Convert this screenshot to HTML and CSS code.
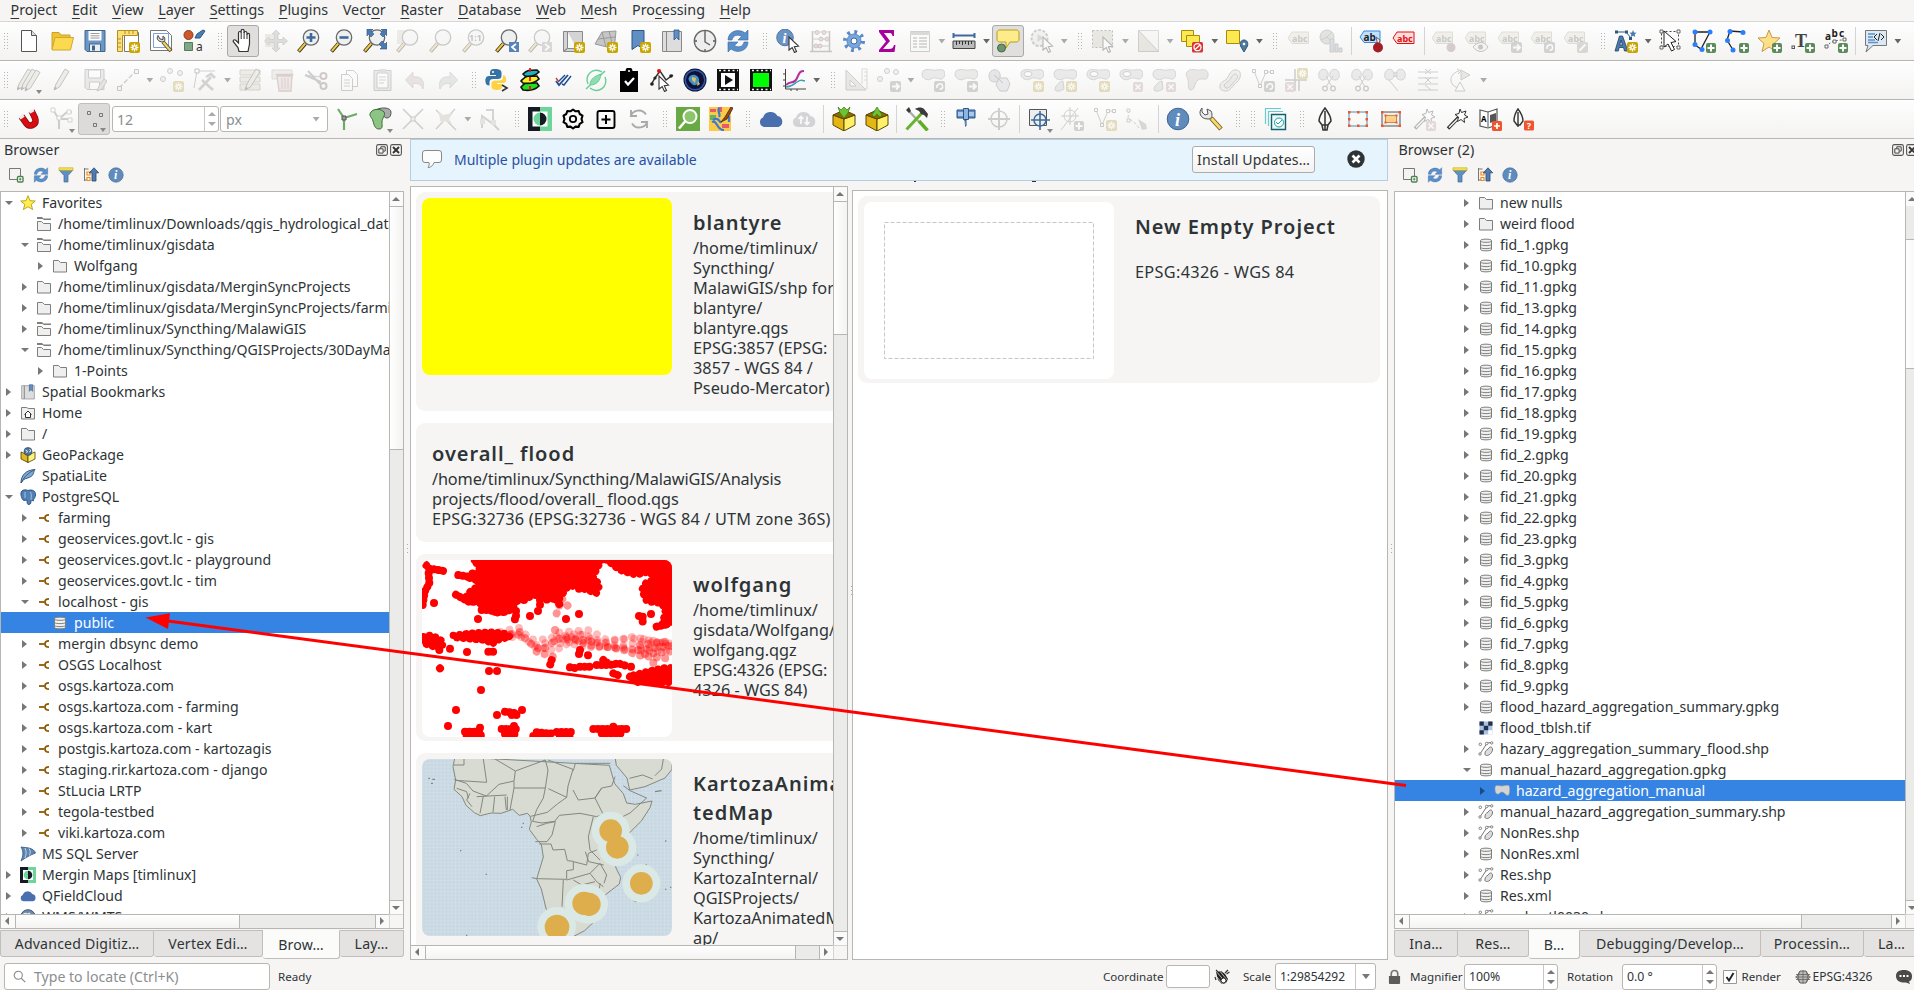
FILE: index.html
```html
<!DOCTYPE html>
<html lang="en">
<head>
<meta charset="utf-8">
<title>QGIS</title>
<link rel="stylesheet" href="styles.css">
</head>
<body>
<svg class="sprite" width="0" height="0">
<!-- badges -->
<symbol id="b-new" viewBox="0 0 24 24"><rect x="13" y="13" width="11" height="11" rx="2" fill="#c9a500"/><path d="M18.500 14.500v8M14.500 18.500h8M15.700 15.700l5.600 5.600M21.300 15.700l-5.600 5.600" stroke="#fff" stroke-width="1.300"/><circle cx="18.500" cy="18.500" r="1" fill="#c9a500"/></symbol>
<symbol id="b-plus" viewBox="0 0 24 24"><rect x="14" y="14" width="10" height="10" rx="2" fill="#5a8c5a"/><path d="M19 15.500v7M15.500 19h7" stroke="#fff" stroke-width="2"/></symbol>
<symbol id="b-arr" viewBox="0 0 24 24"><rect x="13" y="13" width="11" height="11" rx="2" fill="#888"/><path d="M15 18.500h7M19 15.500l3 3-3 3" stroke="#fff" stroke-width="1.800" fill="none"/></symbol>
<symbol id="b-rot" viewBox="0 0 24 24"><rect x="13" y="13" width="11" height="11" rx="2" fill="#888"/><path d="M16 20c-1-4 5-6 5.500-2s-3 3-3 3" stroke="#fff" stroke-width="1.600" fill="none"/></symbol>
<symbol id="b-x" viewBox="0 0 24 24"><rect x="14" y="14" width="10" height="10" rx="2" fill="#c99"/><path d="M16.500 16.500l5 5M21.500 16.500l-5 5" stroke="#fff" stroke-width="1.600"/></symbol>
<symbol id="mag" viewBox="0 0 24 24"><path d="M1.500 22.500l7-8" stroke="#222" stroke-width="3.600"/><path d="M1.800 22l6.500-7.500" stroke="#f5c93a" stroke-width="2"/><circle cx="14" cy="8.500" r="7.700" fill="#eef0f0" stroke="#6a6a6a" stroke-width="1.300"/></symbol>
<symbol id="cursor" viewBox="0 0 24 24"><path d="M11 8v13l3.200-2.500 2.300 5 2-1-2.200-4.700 4.200-.6z" fill="#fff" stroke="#333" stroke-width="1.100"/></symbol>
<symbol id="blob" viewBox="0 0 24 24"><path d="M1 6c0-5 6-5 10-4s10-2 12 1 0 9-4 8-6-2-9 0-9 0-9-5z" fill="#c5cbc5" stroke="#888"/></symbol>
<symbol id="pencil" viewBox="0 0 24 24"><path d="M4 22l2-6L15 1l4 2.500L9.500 19z" fill="#d8d2b8" stroke="#555"/><path d="M4 22l1-3.300 2 1.500z" fill="#333"/></symbol>
<!-- file and view tools -->
<symbol id="new" viewBox="0 0 24 24"><path d="M4.500 1.500h10l5 5v16h-15z" fill="#fff" stroke="#555"/><path d="M14.500 1.500v5h5" fill="#ddd" stroke="#555"/></symbol>
<symbol id="open" viewBox="0 0 24 24"><path d="M2 20V3.500h7l2 2.500h9v4" fill="#f0c332" stroke="#caa12a"/><path d="M2 21L5 8.500h18.500L20.500 21z" fill="#fcd94f" stroke="#d0a82f"/></symbol>
<symbol id="save" viewBox="0 0 24 24"><path d="M2 1.500h20v21H4l-2-2z" fill="#6a96c8" stroke="#41648c"/><path d="M5.500 2h13v9.500h-13z" fill="#fff"/><path d="M7.500 4.500h9M7.500 6.800h9M7.500 9h9" stroke="#999"/><path d="M6.500 15h11v7.500h-11z" fill="#eee" stroke="#41648c"/><path d="M9 16.500h3v5H9z" fill="#41648c"/></symbol>
<symbol id="layout" viewBox="0 0 24 24"><path d="M8.500 3.500h14v19h-14z" fill="#fff" stroke="#777"/><path d="M1.500 1.500h20v5H6.500v16h-5z" fill="#fbe07a" stroke="#b48f1c"/><path d="M9 2v3M13 2v3M17 2v3M2 10h3M2 14h3M2 18h3" stroke="#b48f1c"/></symbol>
<symbol id="manager" viewBox="0 0 24 24"><path d="M1.500 1.500h16l5 5v15h-21z" fill="#fff" stroke="#777"/><path d="M4.500 4.500h15v14h-15z" fill="none" stroke="#7ea0dd"/><path d="M14 13l8 9" stroke="#444" stroke-width="3.800"/><path d="M14 13l7.500 8.500" stroke="#f5d55a" stroke-width="2.200"/><path d="M9 6.500c-2 3 0 6.500 5 6.500 3-1 2-5 0-6v3.500l-3-.5z" fill="#ddd" stroke="#444"/></symbol>
<symbol id="style" viewBox="0 0 24 24"><circle cx="6.500" cy="6" r="4.500" fill="#d0592c" stroke="#8a3a1a"/><path d="M13 9l2-4 6-4 2 1-5 7z" fill="#4a7fb5" stroke="#2b567f"/><path d="M2.500 13.500h8v8h-8z" fill="#7ea888" stroke="#557a5d"/><text x="14" y="22" font-size="12" font-family="Noto Sans" fill="#333">a</text></symbol>
<symbol id="hand" viewBox="0 0 24 24"><path d="M8 22.500l-1-4L2.500 13c-1-2 1-3 2.500-1.500L7.500 14V4c0-2 2.500-2 2.700 0V1.800c0-2 2.700-2 2.900 0V4c0-2 2.700-2 2.900 0v1.700c0-1.700 2.500-1.700 2.500 0V15l-1.500 7.500z" fill="#fff" stroke="#333" stroke-width="1.200"/><path d="M10.200 4v6M13.100 3v7M16 5v5" stroke="#333"/></symbol>
<symbol id="move" viewBox="0 0 24 24"><path d="M1 5h14v13H1z" fill="#cfcbae"/><path d="M12 1l4 4h-2.500v5.500H19V8l4.500 4-4.500 4v-2.500h-5.500V19H16l-4 4-4-4h2.500v-5.500H5V16L.5 12 5 8v2.500h5.500V5H8z" fill="#a5a7ab" stroke="#888"/></symbol>
<symbol id="zin" viewBox="0 0 24 24"><use href="#mag"/><path d="M14 4v9M9.500 8.500h9" stroke="#41699c" stroke-width="2.600"/></symbol>
<symbol id="zout" viewBox="0 0 24 24"><use href="#mag"/><path d="M9.500 8.500h9" stroke="#41699c" stroke-width="2.600"/></symbol>
<symbol id="zfull" viewBox="0 0 24 24"><use href="#mag"/><path d="M4 0h6L8 2l3 3-3 3-3-3-1 2zM24 0h-6l2 2-3 3 3 3 3-3 1 2zM24 20h-7l2-2-3-3 3-3 3 3 2-2z" fill="#4a7ab0" stroke="#2c5583" stroke-width=".6"/></symbol>
<symbol id="zsel" viewBox="0 0 24 24"><path d="M1 1h12v14H1z" fill="#d0ceb4"/><use href="#mag"/></symbol>
<symbol id="z11" viewBox="0 0 24 24"><use href="#mag"/><text x="7" y="12" font-size="9" font-weight="700" font-family="Noto Sans" fill="#555">1:1</text></symbol>
<symbol id="zprev" viewBox="0 0 24 24"><use href="#mag"/><rect x="14" y="13" width="10" height="10" fill="#5583ba"/><path d="M21 15l-4 3 4 3.500" stroke="#fff" stroke-width="1.800" fill="none"/></symbol>
<symbol id="znext" viewBox="0 0 24 24"><use href="#mag"/><rect x="14" y="13" width="10" height="10" fill="#999"/><path d="M17 15l4 3-4 3.500" stroke="#fff" stroke-width="1.800" fill="none"/></symbol>
<symbol id="map1" viewBox="0 0 24 24"><path d="M2.500 2.500h4v17l-4 2.500zM6.500 2.500h15v17h-15l-4 3h15" fill="#d4d4d4" stroke="#888"/><use href="#b-new"/></symbol>
<symbol id="map3d" viewBox="0 0 24 24"><path d="M1 15L8 3l14-1-1 10-3 7-9-2z" fill="#c6c6c6" stroke="#999"/><path d="M4 10l17-2M8 3l4 15M15 2l3 12" stroke="#999" fill="none"/><use href="#b-new"/></symbol>
<symbol id="bmnew" viewBox="0 0 24 24"><path d="M5 1.500h12v19l-6-4-6 4z" fill="#5f8fc5" stroke="#2c5583"/><use href="#b-new"/></symbol>
<symbol id="bm" viewBox="0 0 24 24"><path d="M2.500 2.500h4v20h-4zM6.500 2.500h15v20h-15z" fill="#ddd" stroke="#888"/><path d="M14 1h5v10l-2.500-2.500L14 11z" fill="#5f8fc5" stroke="#2c5583" stroke-width=".8"/></symbol>
<symbol id="clock" viewBox="0 0 24 24"><circle cx="12" cy="12" r="10.700" fill="#eee" stroke="#666" stroke-width="1.300"/><path d="M12 4v9l5 3M12 2v2M12 20v2M2 12h2M20 12h2" fill="none" stroke="#555" stroke-width="1.300"/></symbol>
<symbol id="refresh" viewBox="0 0 24 24"><path d="M2 11C2 2 13-1 19 4l3-3v10H12l3.500-3.500C12 5 7 6 6 11zM22 13c0 9-11 12-17 7l-3 3V13h10l-3.500 3.500C12 19 17 18 18 13z" fill="#5b8fc9" stroke="#3a6aa5" stroke-width=".6"/></symbol>
<symbol id="ident" viewBox="0 0 24 24"><circle cx="9" cy="8.500" r="8.300" fill="#6a93c4" stroke="#4f79a8"/><text x="6.500" y="14" font-size="14" font-style="italic" font-weight="700" font-family="Liberation Serif" fill="#fff">i</text><use href="#cursor" x="2"/></symbol>
<symbol id="abacus" viewBox="0 0 24 24"><path d="M3.500 2v20M20.500 2v20M1 22.500h22" stroke="#666" stroke-width="1.500"/><path d="M3 3h18M3 10h18M3 17h18" stroke="#777"/><g fill="#caa" stroke="#955"><circle cx="8" cy="3.500" r="2"/><circle cx="15" cy="3.500" r="2"/><circle cx="18" cy="10" r="2"/><circle cx="12" cy="10" r="2"/><circle cx="7" cy="17" r="2"/><circle cx="11" cy="17" r="2"/></g></symbol>
<symbol id="gear" viewBox="0 0 24 24"><circle cx="12" cy="12" r="9" fill="none" stroke="#5a8ac4" stroke-width="4" stroke-dasharray="2.800 4.270"/><circle cx="12" cy="12" r="7" fill="#79a7dd" stroke="#5a8ac4"/><circle cx="12" cy="12" r="3" fill="#fff" stroke="#41699c"/></symbol>
<symbol id="sigma" viewBox="0 0 24 24"><path d="M4 1h15v6h-1.500c-.5-2.500-1.500-3-4-3H9l6 8-7 8h6c3 0 4-1 5-4h1.500l-1 7H4v-2l7-8.500L4 3z" fill="#a8009c"/></symbol>
<symbol id="table" viewBox="0 0 24 24"><path d="M2.500 2.500h19v20h-19z" fill="#fff" stroke="#777"/><path d="M2 3h20v3H2z" fill="#999"/><path d="M5 9h4M11 9h8M5 12h4M11 12h8M5 15h4M11 15h8M5 18h4M11 18h8" stroke="#777" stroke-width="1.600"/></symbol>
<symbol id="ruler" viewBox="0 0 24 24"><path d="M1 6.500h22M1.500 4v5M22.500 4v5" stroke="#41699c" stroke-width="2"/><path d="M1 12h22v7.500H1z" fill="#bbb" stroke="#444"/><path d="M4.500 12v4M7.500 12v3M10.500 12v4M13.500 12v3M16.500 12v4M19.500 12v3" stroke="#333"/></symbol>
<symbol id="tip" viewBox="0 0 24 24"><path d="M4 1h16c2 0 3 1 3 3v6c0 2-1 3-3 3h-6l-4 6v-6H4c-2 0-3-1-3-3V4c0-2 1-3 3-3z" fill="#fdec8a" stroke="#b99d1d"/><circle cx="5.500" cy="19" r="4" fill="#6d946d" stroke="#446644"/></symbol>
<symbol id="runact" viewBox="0 0 24 24"><circle cx="9.500" cy="9" r="8" fill="#ddd" stroke="#777" stroke-width="2" stroke-dasharray="3 1.500"/><path d="M7.500 5v8l6-4z" fill="#999"/><use href="#cursor" x="2"/></symbol>
<symbol id="selrect" viewBox="0 0 24 24"><path d="M1.500 1.500h20v17h-20z" fill="#c6c3aa" stroke="#444" stroke-dasharray="2 2"/><use href="#cursor" x="1"/></symbol>
<symbol id="selval" viewBox="0 0 24 24"><path d="M2.500 1.500h20v21h-20z" fill="#eee" stroke="#999"/><path d="M2.500 1.500l20 21h-20z" fill="#c6c3aa" stroke="#777"/></symbol>
<symbol id="desel" viewBox="0 0 24 24"><path d="M1.500 1.500h12v11h-12z" fill="#fce94f" stroke="#a68a14"/><path d="M6.500 6.500h13v11h-13z" fill="#fce94f" stroke="#a68a14"/><rect x="12" y="13" width="11" height="10.500" rx="1.500" fill="#d33"/><circle cx="17.500" cy="18.200" r="3.500" fill="none" stroke="#fff" stroke-width="1.300"/><path d="M15 20.500l5-4.500" stroke="#fff" stroke-width="1.300"/></symbol>
<symbol id="selloc" viewBox="0 0 24 24"><path d="M1.500 1.500h13v13h-13z" fill="#fce94f" stroke="#a68a14"/><path d="M19 23l-3.500-6c-1-4 1-6 3.500-6s4.500 2 3.500 6z" fill="#4f7ba3" stroke="#305777"/><circle cx="19" cy="15" r="1.300" fill="#fff"/></symbol>
<!-- labels -->
<symbol id="lab" viewBox="0 0 24 24"><path d="M2 9l4-6h16.500v11.500H6z" fill="#ded9bb" stroke="#aaa583"/><text x="6" y="12.500" font-size="9" font-weight="700" font-family="Noto Sans" fill="#666">abc</text></symbol>
<symbol id="diag" viewBox="0 0 24 24"><circle cx="8" cy="8" r="7" fill="#a9b8a5" stroke="#777"/><path d="M8 8l5-5M8 8l-6 3M8 8l5 5" stroke="#777"/><path d="M11 10h4v13h-4zM16 15h3v8h-3zM20 19h3v4h-3z" fill="#9ab" stroke="#777"/></symbol>
<symbol id="labpin" viewBox="0 0 24 24"><path d="M1 8l4-6h16v11.500H5z" fill="#bfe0ff" stroke="#3b87d8"/><text x="4.500" y="11.500" font-size="10" font-weight="700" font-family="Noto Sans" fill="#222">ab</text><path d="M17 8l4 3-2 6z" fill="#eee" stroke="#666"/><circle cx="19" cy="18.500" r="5" fill="#a31d22"/></symbol>
<symbol id="labred" viewBox="0 0 24 24"><path d="M1 9l4-6h17v11.500H5z" fill="#ffdcdc" stroke="#e01010"/><text x="5" y="12.500" font-size="9" font-weight="700" font-family="Noto Sans" fill="#e01010">abc</text></symbol>
<symbol id="labpin2" viewBox="0 0 24 24"><use href="#lab" x="-2"/><circle cx="19" cy="18.500" r="4.500" fill="#977"/></symbol>
<symbol id="labeye" viewBox="0 0 24 24"><use href="#lab" x="-2"/><path d="M8 18c5-6 11-6 15 0-4 6-10 6-15 0z" fill="#eee" stroke="#555"/><circle cx="15.500" cy="18" r="2.500" fill="#666"/></symbol>
<symbol id="labmov" viewBox="0 0 24 24"><use href="#lab" x="-2"/><use href="#b-arr"/></symbol>
<symbol id="labrot" viewBox="0 0 24 24"><use href="#lab" x="-2"/><use href="#b-rot"/></symbol>
<symbol id="labedit" viewBox="0 0 24 24"><use href="#lab" x="-2"/><rect x="13" y="13" width="11" height="11" rx="2" fill="#998"/><path d="M15.500 21.500l6-6" stroke="#fff" stroke-width="2"/></symbol>
<!-- annotations -->
<symbol id="annlayer" viewBox="0 0 24 24"><path d="M2 3h10l5 6" fill="none" stroke="#33597f"/><path d="M1 1.500h3v3H1zM11 1.500h3v3h-3zM15 8h3v3h-3z" fill="#33597f"/><path d="M1 22L5.500 7h3L14 22h-3.500l-1-3.500H5.200L4.300 22zM7 11l-1.200 5h2.600z" fill="#4a7ab0" stroke="#223f5e" stroke-width=".8"/><path d="M19 1l1 2.500 2.500.3-1.800 1.700.5 2.500-2.200-1.300L16.800 8l.5-2.500-1.800-1.700 2.500-.3z" fill="#4a7ab0"/><use href="#b-new"/></symbol>
<symbol id="annsel" viewBox="0 0 24 24"><path d="M2.500 2.500h17v15h-17z" fill="none" stroke="#444" stroke-dasharray="2 2"/><path d="M1 1h3v3H1zM18 1h3v3h-3zM1 17h3v3H1zM18 17h3v3h-3z" fill="#fff" stroke="#444" stroke-width=".8"/><path d="M5 2v16l4-3 3.500 7 3-1.500-3.500-7 5-1z" fill="#fff" stroke="#222"/></symbol>
<symbol id="annpoly" viewBox="0 0 24 24"><path d="M3 3h15L9 20 3 16z" fill="none" stroke="#222" stroke-width="1.300"/><g fill="#2b7fff"><circle cx="3" cy="3" r="2.500"/><circle cx="18" cy="3" r="2.500"/><circle cx="3" cy="15.500" r="2.500"/><circle cx="10" cy="20.500" r="2.500"/></g><use href="#b-plus"/></symbol>
<symbol id="annline" viewBox="0 0 24 24"><path d="M18 3L5 2 2 11l6 10" fill="none" stroke="#222" stroke-width="1.300"/><g fill="#2b7fff"><circle cx="18" cy="3.500" r="2.500"/><circle cx="5" cy="2.500" r="2.500"/><circle cx="2.500" cy="11.500" r="2.500"/><circle cx="8" cy="21" r="2.500"/></g><use href="#b-plus"/></symbol>
<symbol id="annstar" viewBox="0 0 24 24"><path d="M11 1l3 7.500 8 .5-6 5.500 2 8-7-4.500-7 4.500 2-8L0 9l8-.5z" fill="#ffe08a" stroke="#c89a4a"/><use href="#b-plus"/></symbol>
<symbol id="anntext" viewBox="0 0 24 24"><text x="4" y="18" font-size="18" font-family="Liberation Serif" font-weight="700" fill="#444">T</text><rect x="1" y="17" width="2.500" height="2.500" fill="none" stroke="#555"/><use href="#b-plus"/></symbol>
<symbol id="anncurve" viewBox="0 0 24 24"><text x="1" y="11" font-size="10" font-weight="700" font-family="Noto Sans" fill="#222">a</text><text x="7.500" y="8" font-size="10" font-weight="700" font-family="Noto Sans" fill="#222">b</text><text x="15" y="8" font-size="10" font-weight="700" font-family="Noto Sans" fill="#222">c</text><path d="M2 18c4-5 8-7 18-7" fill="none" stroke="#666" stroke-dasharray="2 2"/><path d="M1 16h3v3H1zM9 11h3v3H9zM19 9h3v3h-3z" fill="#fff" stroke="#666"/><use href="#b-plus"/></symbol>
<symbol id="annhtml" viewBox="0 0 24 24"><path d="M1.500 1.500h21v15H9L2 23l2-6.500H1.500z" fill="#dbe9f5" stroke="#777"/><path d="M4 5h7M4 8h5M4 11h7M4 13.500h10" stroke="#5f8fc5" stroke-width="1.600"/><path d="M13 5l-3 3 3 3M17 5l3 3-3 3M16 4l-2 8" stroke="#222" fill="none"/></symbol>
<!-- digitizing -->
<symbol id="pencils" viewBox="0 0 24 24"><use href="#pencil" x="-4"/><use href="#pencil" x="0"/><use href="#pencil" x="4" y="1"/></symbol>
<symbol id="saveedit" viewBox="0 0 24 24"><path d="M2 1.500h19v20H4l-2-2z" fill="#ccc" stroke="#777"/><path d="M5.500 2h12v8h-12zM6.500 14h10v7.500h-10z" fill="#fff" stroke="#777"/><path d="M14 23l2-5 5-7 3 2-5 8z" fill="#cba" stroke="#866"/></symbol>
<symbol id="linedig" viewBox="0 0 24 24"><path d="M3 20L20 3" stroke="#777" stroke-width="1.400" stroke-dasharray="5 2"/><path d="M1.500 18.500h4v4h-4zM18.500 1.500h4v4h-4z" fill="#eee" stroke="#666"/></symbol>
<symbol id="ptsnew" viewBox="0 0 24 24"><g fill="#ddd" stroke="#777"><circle cx="3" cy="11" r="2.500"/><circle cx="10" cy="3" r="2.500"/><circle cx="20" cy="5" r="2.500"/></g><use href="#b-new"/></symbol>
<symbol id="vertex" viewBox="0 0 24 24"><path d="M4 3h18M4 3L1 20" stroke="#777" fill="none"/><path d="M2 1h4v4H2z" fill="#fff" stroke="#555"/><path d="M6 22L18 9M9 12l11 10" stroke="#888" stroke-width="2.600"/><path d="M13 9l5-3 4 4" fill="none" stroke="#888" stroke-width="2.600"/></symbol>
<symbol id="modattr" viewBox="0 0 24 24"><path d="M2 2h20v5H2zM2 9h20v5H2zM2 16h20v6H2z" fill="#d6d3a9" stroke="#888"/><use href="#pencil" x="3"/></symbol>
<symbol id="trash" viewBox="0 0 24 24"><path d="M1 2h20v9H1z" fill="#ddd6c6" stroke="#a99"/><path d="M6 8h15l-1 15H8zM4.500 6.500h18" fill="#e4c6be" stroke="#a77" stroke-width="1.300"/><path d="M11 10v11M14 10v11M17 10v11" stroke="#a77"/></symbol>
<symbol id="cut" viewBox="0 0 24 24"><path d="M1 7l16 7M4 3l12 13" stroke="#777" stroke-width="2"/><circle cx="19.500" cy="8" r="3" fill="none" stroke="#866" stroke-width="2"/><circle cx="19.500" cy="18" r="3" fill="none" stroke="#866" stroke-width="2"/><path d="M1 7l16 2" stroke="#777"/></symbol>
<symbol id="copy" viewBox="0 0 24 24"><path d="M9.500 2.500h7l4 4v12h-11z" fill="#fff" stroke="#777"/><path d="M4.500 6.500h7l4 4v12h-11z" fill="#fff" stroke="#777"/><path d="M7 12h6M7 15h6M7 18h6" stroke="#888"/></symbol>
<symbol id="paste" viewBox="0 0 24 24"><path d="M4 2.500h17v20H4z" fill="#ccc" stroke="#777"/><path d="M7 5h11v15H7z" fill="#fff" stroke="#777"/><path d="M9 1h7v4H9z" fill="#aaa"/><path d="M9 9h7M9 12h7M9 15h5" stroke="#888"/></symbol>
<symbol id="undo" viewBox="0 0 24 24"><path d="M10 4v5c8-1 12 3 10 12-2-4-4-6-10-5.500V20l-7.500-8z" fill="#cfb5ad" stroke="#a99b95"/></symbol>
<symbol id="redo" viewBox="0 0 24 24"><path d="M14 4v5C6 8 2 12 4 21c2-4 4-6 10-5.500V20l7.500-8z" fill="#b5c5ba" stroke="#95a59b"/></symbol>
<!-- plugins -->
<symbol id="python" viewBox="0 0 24 24"><path d="M10 1c-4 0-5 1.500-5 4v2h6v1H4C1 8 0 11 .5 14c.3 2.500 1.500 3.500 4 3.500V14c0-2 1.500-3 3.500-3h5c2 0 3.500-1 3.500-3V5c0-3-2-4-6.500-4z" fill="#3772a4"/><path d="M11 22c5 0 6-1.500 6-4v-2h-5v-1h7c2 0 2.500-3 2-5-.5-2-1.500-2.500-3-2.500v2c0 2-1.500 3-3.500 3h-4c-2 0-4 1-4 3v3c0 2.500 2 3.500 4.500 3.500z" fill="#ffd242"/><circle cx="8" cy="4" r="1" fill="#fff"/><path d="M17 17l5 3-5 3" fill="none" stroke="#333" stroke-width="1.600"/></symbol>
<symbol id="stack" viewBox="0 0 24 24"><g stroke="#111" stroke-width="1.600"><path d="M3 19c5-5 4-4 16-4l2 3c-4 4-10 5-16 4z" fill="#2d2"/><path d="M3 13c5-5 4-5 16-5l2 3c-4 4-10 5-16 4z" fill="#fe2"/><path d="M5 6c4-4 6-4 14-4l2 2c-4 4-8 5-14 4z" fill="#1ab5c5"/></g><path d="M12 0v24" stroke="#e11" stroke-width="1.800" stroke-dasharray="4 5"/></symbol>
<symbol id="checks" viewBox="0 0 24 24"><path d="M5 13l3 4 9-10" fill="none" stroke="#1c4e95" stroke-width="1.800"/><path d="M5 10l3 4" fill="none" stroke="#c33" stroke-width="1.300"/><path d="M8 13l6-6M11 16l2 1 7-9" fill="none" stroke="#1c4e95" stroke-width="1.400"/></symbol>
<symbol id="ring" viewBox="0 0 24 24"><path d="M4 16A9.500 9.500 0 0 1 18 4M21 9A9.500 9.500 0 0 1 6 20" fill="none" stroke="#67cf95" stroke-width="1.400"/><path d="M2 21L21 3" stroke="#67cf95" stroke-width="1.500"/><path d="M6 17c0-6 5-9 11-11-1 7-4 11-11 11z" fill="#8fdcb1" stroke="#67cf95"/></symbol>
<symbol id="clip" viewBox="0 0 24 24"><path d="M3 3h5.500a3.500 3.500 0 0 1 7 0H21v21H3z" fill="#000"/><path d="M8 13l3 3.500 6-6.500" fill="none" stroke="#fff" stroke-width="2.200"/><circle cx="12" cy="3" r="1" fill="#fff"/></symbol>
<symbol id="trace" viewBox="0 0 24 24"><path d="M1 17l4-7 5-7 6 9 4-3 3-2" fill="none" stroke="#333" stroke-width="1.500"/><circle cx="9" cy="3" r="2" fill="#d11"/><g fill="#222"><circle cx="2" cy="16" r="1.800"/><circle cx="5" cy="10" r="1.600"/><circle cx="21" cy="8" r="1.800"/></g><use href="#cursor" x="-2"/></symbol>
<symbol id="earth" viewBox="0 0 24 24"><circle cx="12" cy="12" r="11.500" fill="#0c1238"/><circle cx="12" cy="12" r="9.800" fill="none" stroke="#3258a8" stroke-width="1.500"/><path d="M7 8c4-3 9 0 9 4s-4 7-7 4-5-5-2-8z" fill="#4b8fc0"/><path d="M9 9l4 1-1 5-3-3zM15 13l2 3-3 2z" fill="#d6c468"/></symbol>
<symbol id="film" viewBox="0 0 24 24"><path d="M1 1h22v22H1z" fill="#111"/><path d="M5 5h14v14H5z" fill="#fff"/><path d="M3 2.500h19M3 21.500h19" stroke="#fff" stroke-width="1.500" stroke-dasharray="2 2.500"/><path d="M9 7v10l8-5z" fill="#111"/></symbol>
<symbol id="filmg" viewBox="0 0 24 24"><path d="M1 1h22v22H1z" fill="#111"/><path d="M4 5h16v14H4z" fill="#0f0"/><path d="M3 2.500h19M3 21.500h19" stroke="#fff" stroke-width="1.500" stroke-dasharray="2 2.500"/></symbol>
<symbol id="plot" viewBox="0 0 24 24"><path d="M3.500 1v20H24M1 18h2M1 12h2M1 6h2M9 21v2M15 21v2" stroke="#444" fill="none"/><path d="M4 17c5-5 8 0 11-7s4-7 7-7" stroke="#b42ea0" stroke-width="2" fill="none"/><path d="M4 19c6 0 8-3 11-5s4-2 8-1" stroke="#3aa0b0" stroke-width="1.500" fill="none"/></symbol>
<symbol id="setsq" viewBox="0 0 24 24"><path d="M2 2v20h20z" fill="#cfc6b8" stroke="#777"/><path d="M6 12v6h6z" fill="#fff" stroke="#777"/><path d="M18 1h5v20h-2M18 1v15M20 4h3M20 8h3M20 12h3" fill="none" stroke="#998"/></symbol>
<symbol id="ptsmov" viewBox="0 0 24 24"><g fill="#ddd" stroke="#777"><circle cx="3" cy="11" r="2.500"/><circle cx="10" cy="3" r="2.500"/><circle cx="19" cy="4" r="2.500"/></g><use href="#b-arr"/></symbol>
<symbol id="brot" viewBox="0 0 24 24"><use href="#blob"/><use href="#b-rot"/></symbol>
<symbol id="bmov" viewBox="0 0 24 24"><use href="#blob"/><use href="#b-arr"/></symbol>
<symbol id="bscale" viewBox="0 0 24 24"><path d="M2 8c0-8 10-8 11-2s-2 8-5 8-6-1-6-6z" fill="#bbc" stroke="#777"/><path d="M12 10h8l3 6-3 7h-7l-4-6z" fill="#ccd" stroke="#777"/><path d="M7 7l9 8" stroke="#555"/></symbol>
<symbol id="bring" viewBox="0 0 24 24"><use href="#blob"/><ellipse cx="8" cy="6" rx="4" ry="2.500" fill="#fff" stroke="#777"/><use href="#b-new"/></symbol>
<symbol id="bpart" viewBox="0 0 24 24"><use href="#blob"/><path d="M2 22c0-4 4-8 8-9l1 8c-3 2-7 3-9 1z" fill="#c5cbc5" stroke="#888"/><use href="#b-new"/></symbol>
<symbol id="bringx" viewBox="0 0 24 24"><use href="#blob"/><ellipse cx="8" cy="6" rx="4" ry="2.500" fill="#fff" stroke="#777"/><use href="#b-x"/></symbol>
<symbol id="bpartx" viewBox="0 0 24 24"><use href="#blob"/><path d="M2 22c0-4 4-8 8-9l1 8c-3 2-7 3-9 1z" fill="#c5cbc5" stroke="#888"/><use href="#b-x"/></symbol>
<symbol id="breshape" viewBox="0 0 24 24"><path d="M2 4c4-5 9-1 13-2s9 0 8 6-6 1-10 4-3 10-7 10-2-6-3-10-3-5-1-8z" fill="#c5c2b5" stroke="#888"/></symbol>
<symbol id="boff" viewBox="0 0 24 24"><path d="M2 19c-1-5 6-6 8-10s4-8 9-7 4 9 0 12-7 10-12 9-5-2-5-4z" fill="#dcdacb" stroke="#777"/><path d="M6 18c0-3 5-4 7-8s4-5 6-3-1 5-3 7-5 7-8 6z" fill="#ccc" stroke="#777"/></symbol>
<symbol id="vert" viewBox="0 0 24 24"><path d="M3 3l6 15 6-14h6" fill="none" stroke="#777"/><path d="M1.500 1.500h3v3h-3zM7.500 16.500h3v3h-3zM13.500 2.500h3v3h-3zM19.500 2.500h3v3h-3z" fill="#fff" stroke="#666"/></symbol>
<symbol id="vertrot" viewBox="0 0 24 24"><use href="#vert"/><use href="#b-rot"/></symbol>
<symbol id="vertnew" viewBox="0 0 24 24"><use href="#vert"/><use href="#b-new"/></symbol>
<symbol id="trim" viewBox="0 0 24 24"><path d="M11 1v22M1 12h22M15 12v11" stroke="#777" stroke-width="1.500"/><use href="#b-x" x="-13"/><use href="#b-new" y="-13"/></symbol>
<symbol id="bcut" viewBox="0 0 24 24"><path d="M2 5c1-5 8-5 9 0s-2 7-5 7-5-2-4-7zM13 5c1-5 8-5 9 0s-1 7-4 7-6-2-5-7z" fill="#c5cbc5" stroke="#888"/><path d="M9 8l6 11M16 8L9 19" stroke="#777"/><circle cx="8" cy="20.500" r="2.300" fill="none" stroke="#866" stroke-width="1.300"/><circle cx="16" cy="20.500" r="2.300" fill="none" stroke="#866" stroke-width="1.300"/></symbol>
<symbol id="bmerge" viewBox="0 0 24 24"><path d="M2 5c1-5 8-5 9 0s-2 7-5 7-5-2-4-7zM13 5c1-5 8-5 9 0s-1 7-4 7-6-2-5-7z" fill="#c5cbc5" stroke="#888"/><path d="M10 5h5M10 8h5M6 12l9 11" stroke="#777"/></symbol>
<symbol id="bedges" viewBox="0 0 24 24"><path d="M2 4h20M2 10h20M2 16h20M2 22h20M9 1l6 5M15 1L9 6M9 9l6 6M15 9l-6 6M9 17l6 5" stroke="#777" fill="none"/></symbol>
<symbol id="brotpt" viewBox="0 0 24 24"><path d="M9 20C-2 16 1 5 10 3M8 1l4 2-3 3" fill="none" stroke="#666"/><path d="M12 2l9 5-9 5z" fill="#b9c5b9" stroke="#777"/><path d="M11 14l5 9H6z" fill="#fff" stroke="#777"/></symbol>
<!-- third row -->
<symbol id="magnet" viewBox="0 0 24 24"><path d="M4.500 9.500l5 7c3 4 9.500 1.500 9-3.500-.2-2.500-2-5-4-9" fill="none" stroke="#7e0a0c" stroke-width="6.500"/><path d="M4.500 9.500l5 7c3 4 9.500 1.500 9-3.500-.2-2.500-2-5-4-9" fill="none" stroke="#d80d12" stroke-width="5"/><path d="M3.600 8.300l2 2.800M13.800 2.800l1.400 2.700" stroke="#eee" stroke-width="5"/></symbol>
<symbol id="snapv" viewBox="0 0 24 24"><path d="M9 22V12L3 3M9 12l8-7h5M9 12h12" fill="none" stroke="#777" stroke-width="2"/><path d="M1 1h4v4H1zM17 3h4v4h-4zM18 11h4v4h-4zM7 9h4v4H7z" fill="#fff" stroke="#888"/></symbol>
<symbol id="snapt" viewBox="0 0 24 24"><path d="M5.500 4.500h3v3h-3zM17.500 6.500h3v3h-3zM11.500 16.500h3v3h-3z" fill="#ddd" stroke="#777"/></symbol>
<symbol id="topo" viewBox="0 0 24 24"><path d="M9 23V11L3 2M9 11l13-4" fill="none" stroke="#6cab68" stroke-width="2.200"/><path d="M7 9h4v4H7z" fill="#999" stroke="#555"/></symbol>
<symbol id="overlap" viewBox="0 0 24 24"><path d="M8 3c4-3 15-3 15 2s-2 6-5 6z" fill="#aaa" stroke="#555"/><path d="M3 5c3-4 11-3 13 0s-2 6-2 10 1 7-3 7-5-4-6-8-5-5-2-9z" fill="#8cc484" stroke="#3c6a38"/></symbol>
<symbol id="cross" viewBox="0 0 24 24"><path d="M2 2l20 20M22 2L2 22" stroke="#777" stroke-width="1.500"/><path d="M10 10h4v4h-4z" fill="#ddd" stroke="#777"/></symbol>
<symbol id="selfs" viewBox="0 0 24 24"><path d="M2 3l20 20M21 2L2 22" stroke="#777" stroke-width="1.300"/><path d="M4 4l5 4 10-2-4 6 3 5-6-3-5 2z" fill="#bbb69b"/></symbol>
<symbol id="zig" viewBox="0 0 24 24"><path d="M4 21V9l11 8V3M15 17l6 6M8 3h8" fill="none" stroke="#888" stroke-width="2"/><path d="M2 12h5v5H2zM13 13h5v5h-5z" fill="#bbb"/></symbol>
<symbol id="mergin" viewBox="0 0 24 24"><path d="M0 0h12v24H0z" fill="#161a22"/><path d="M12 0h12v24H12z" fill="#6dd59a"/><path d="M4.500 4.500h15v15h-15z" fill="#fff"/><path d="M12 5.500a6.500 6.500 0 0 0 0 13z" fill="#6dd59a"/><path d="M12 5.500a6.500 6.500 0 0 1 0 13z" fill="#161a22"/></symbol>
<symbol id="gearo" viewBox="0 0 24 24"><path d="M12 2.500l2.500 1.800 3.200-.3 1 3 2.800 1.700-1 3.300 1 3.200-2.800 1.600-1 3.100-3.200-.3L12 21.500l-2.500-1.900-3.200.3-1-3.100-2.800-1.600 1-3.200-1-3.300L5.300 7l1-3 3.200.3z" fill="none" stroke="#000" stroke-width="2.100" stroke-linejoin="round"/><circle cx="12" cy="12" r="3.200" fill="none" stroke="#000" stroke-width="1.800"/></symbol>
<symbol id="addbox" viewBox="0 0 24 24"><rect x="3.500" y="4" width="17" height="17" rx="2" fill="none" stroke="#000" stroke-width="1.900"/><path d="M12 8v9M7.500 12.500h9" stroke="#000" stroke-width="2"/></symbol>
<symbol id="sync" viewBox="0 0 24 24"><path d="M3.500 10A8.500 8.500 0 0 1 19 7.500M20.500 14A8.500 8.500 0 0 1 5 16.500M4 3v6h6M20 21v-6h-6" fill="none" stroke="#aaa" stroke-width="1.900"/></symbol>
<symbol id="gsearch" viewBox="0 0 24 24"><path d="M0 0h24v24H0z" fill="#69a944"/><circle cx="14" cy="9.500" r="6.500" fill="#8cc56b" stroke="#fff" stroke-width="2"/><path d="M9 14.500l-6 7" stroke="#fff" stroke-width="2.600"/></symbol>
<symbol id="osm" viewBox="0 0 24 24"><path d="M0 0h22v24H0z" fill="#f9cb46"/><path d="M1 2h6v3H1zM9 0h4v5H9zM13 17h7v4h-7z" fill="#e65a6a"/><path d="M1 8h6v5H1z" fill="#67b35c"/><path d="M3 15c5-3 5 9 12 8M17 9l3 1v5M4 13c4-3 6 0 8 3M10 1c-2 4 2 6 0 9" stroke="#3f78d4" stroke-width="2.200" fill="none"/><path d="M12 15l4-5 6-10 2 1-6 11z" fill="#9a4a16" stroke="#4a230a" stroke-width=".8"/></symbol>
<symbol id="cloud" viewBox="0 0 24 24"><path d="M5 20a5 5 0 0 1-1-9.500A8 8 0 0 1 18.500 9a5.700 5.700 0 0 1 1 11z" fill="#4a6fae"/></symbol>
<symbol id="cloudsync" viewBox="0 0 24 24"><path d="M5 20a5 5 0 0 1-1-9.500A8 8 0 0 1 18.500 9a5.700 5.700 0 0 1 1 11z" fill="#888c94"/><path d="M9 17v-7M6.500 12L9 9.500l2.500 2.500M15 9.500v7M12.500 15l2.500 2.500 2.500-2.500" fill="none" stroke="#fff" stroke-width="1.700"/></symbol>
<symbol id="boxdn" viewBox="0 0 24 24"><path d="M1 8l11 4v12L1 18z" fill="#e3b613" stroke="#5a4700"/><path d="M12 12l11-4v10l-11 6z" fill="#fff06a" stroke="#5a4700"/><path d="M1 8l11-5 11 5-11 4z" fill="#8a6d00" stroke="#5a4700"/><path d="M6 0l3 3 3-3 3 3 3-3-2 6-4 5-4-5z" fill="#6cc430" stroke="#3b7a12" stroke-width=".7"/></symbol>
<symbol id="boxup" viewBox="0 0 24 24"><path d="M1 8l11 4v12L1 18z" fill="#e3b613" stroke="#5a4700"/><path d="M12 12l11-4v10l-11 6z" fill="#fff06a" stroke="#5a4700"/><path d="M1 8l11-5 11 5-11 4z" fill="#8a6d00" stroke="#5a4700"/><path d="M12 0l5 8-2 2-3-3-3 3-2-2z" fill="#6cc430" stroke="#3b7a12" stroke-width=".7"/></symbol>
<symbol id="hammer" viewBox="0 0 24 24"><path d="M3 3l12 13" stroke="#aaa" stroke-width="2.200"/><path d="M14 14l8.500 9.500" stroke="#5fae22" stroke-width="3.400"/><path d="M1.500 22.500L17 6" stroke="#6ab42d" stroke-width="3"/><path d="M1 3l3-3 2 4-2 2zM10 2c3-2 7-2 9 0l4 5-1 4-3-3-3-1-2-3z" fill="#3b3b3b"/></symbol>
<symbol id="flagp" viewBox="0 0 24 24"><path d="M3 3h18v8H3z" fill="#5f8fc5" stroke="#2c5583"/><path d="M4 5h5v4H4zM15 5h5v4h-5z" fill="#a9c9ec"/><path d="M9.500 1.500h5v11h-5zM10 13h2v6h-1" fill="#8db4df" stroke="#2c5583"/></symbol>
<symbol id="target" viewBox="0 0 24 24"><circle cx="12" cy="12" r="8" fill="none" stroke="#777" stroke-width="1.500"/><path d="M12 1v22M1 12h22" stroke="#777" stroke-width="2"/></symbol>
<symbol id="targetsel" viewBox="0 0 24 24"><path d="M2.500 2.500h17v16h-17z" fill="#eee" stroke="#555"/><circle cx="13" cy="13" r="6" fill="none" stroke="#3c6c9c" stroke-width="1.500"/><path d="M13 4v19M4 13h19" stroke="#3c6c9c" stroke-width="1.600"/></symbol>
<symbol id="targetadd" viewBox="0 0 24 24"><circle cx="10" cy="9" r="6" fill="none" stroke="#777"/><path d="M10 0v18M1 9h18M1 23L18 1" stroke="#777"/><rect x="14" y="14" width="10" height="10" rx="2" fill="#888"/><path d="M19 15.500v7M15.500 19h7" stroke="#fff" stroke-width="2"/></symbol>
<symbol id="ptsel" viewBox="0 0 24 24"><path d="M3 3l-1 8 6 4 6 7" fill="none" stroke="#777" stroke-dasharray="3 2"/><path d="M1 2h3v3H1zM1 12h3v3H1z" fill="#fff" stroke="#777"/><path d="M12 12l8 5 1 5-5 1z" fill="#999"/></symbol>
<symbol id="info" viewBox="0 0 24 24"><circle cx="12" cy="12" r="10.800" fill="#5f8cbd" stroke="#3f6895"/><text x="9" y="18.500" font-size="18" font-style="italic" font-weight="700" font-family="Liberation Serif" fill="#fff">i</text></symbol>
<symbol id="wrench" viewBox="0 0 24 24"><path d="M12 11l10 11" stroke="#6a5a20" stroke-width="4.600"/><path d="M12.500 11.500l9 10" stroke="#f7d86a" stroke-width="3"/><path d="M3 1C-1 5 1 12 9 12c4 0 5-4 3-8L8 2l1 5-3 1-3-3z" fill="#e8e8e8" stroke="#555"/></symbol>
<symbol id="pages" viewBox="0 0 24 24"><path d="M1.500 17V1.500H17M4.500 19V4.500H19" fill="none" stroke="#6cc" stroke-width="1.200"/><path d="M7.500 7.500h14v15h-14z" fill="#e9f8f8" stroke="#176070" stroke-width="1.400"/><circle cx="15" cy="15.500" r="4.500" fill="#fff" stroke="#19a0a0"/><path d="M12 15l2 2 4-4" stroke="#19a0a0" fill="none"/></symbol>
<symbol id="nib" viewBox="0 0 24 24"><path d="M12 1c3 4 6 9 6 13l-3 4H9l-3-4c0-4 3-9 6-13zM12 4v19M9 18l1 5h4l1-5" fill="none" stroke="#333" stroke-width="1.500"/></symbol>
<symbol id="rsel" viewBox="0 0 24 24"><path d="M3 5h18v14H3z" fill="none" stroke="#4a90b0"/><path d="M2 4h2.500v2.500H2zM11 4h2.500v2.500H11zM19.500 4H22v2.500h-2.500zM2 17.500h2.500V20H2zM11 17.500h2.500V20H11zM19.500 17.500H22V20h-2.500zM2 11h2.500v2.500H2zM19.500 11H22v2.500h-2.500z" fill="#f0562d"/></symbol>
<symbol id="rsel2" viewBox="0 0 24 24"><path d="M3 5h18v14H3z" fill="#eee" stroke="#555"/><path d="M6.500 8.500h11v7h-11z" fill="#ffd08a" stroke="#c84"/><path d="M2 4h2.500v2.500H2zM19.500 4H22v2.500h-2.500zM2 17.500h2.500V20H2zM19.500 17.500H22V20h-2.500zM5.500 7.500h2v2h-2zM16.500 7.500h2v2h-2zM5.500 14.500h2v2h-2zM16.500 14.500h2v2h-2z" fill="#f0562d"/></symbol>
<symbol id="wand" viewBox="0 0 24 24"><path d="M3 21.500L14 10" stroke="#333" stroke-width="3.400"/><path d="M4 20.500L13 11.500" stroke="#fff" stroke-width="1.200"/><path d="M15 2l1.500 3.500L21 4l-1.500 4L23 10l-4 1.500.5 4-3.500-3-3.500 2 1-4.500L10 7.500l4-1z" fill="#fff" stroke="#333"/></symbol>
<symbol id="book" viewBox="0 0 24 24"><path d="M2 3l8 2 9-3v16l-9 3-8-2z" fill="#fff" stroke="#555" stroke-width="1.200"/><path d="M10 5v15" stroke="#555"/><text x="3" y="15" font-size="8" font-weight="700" font-family="Noto Sans">A</text><path d="M12 8l6-2v8l-6 2z" fill="#555"/><rect x="14" y="14" width="10" height="10" rx="1.500" fill="#f0562d"/><path d="M19 16v6M16 19h6" stroke="#fff" stroke-width="1.700"/></symbol>
<symbol id="nibq" viewBox="0 0 24 24"><path d="M7 2c3 4 5 8 5 12l-3 4H6l-3-4c0-4 1-8 4-12zM7 5v15" fill="none" stroke="#333" stroke-width="1.400"/><rect x="13" y="13.500" width="10" height="10" rx="1.500" fill="#f0562d"/><text x="15.700" y="22" font-size="9" font-weight="700" font-family="Noto Sans" fill="#fff">?</text></symbol>
<!-- 16px tree icons -->
<symbol id="star" viewBox="0 0 16 16"><path d="M8 .7l2 5 5.300.3-4.100 3.400 1.400 5.200L8 11.700l-4.600 2.900 1.400-5.200L.7 6 6 5.700z" fill="#fff04d" stroke="#b89a1a" stroke-width=".9"/></symbol>
<symbol id="fold" viewBox="0 0 16 16"><path d="M1.500 14V2.500h5l2 2h6V14z" fill="#efefef" stroke="#7c7f7a"/></symbol>
<symbol id="foldl" viewBox="0 0 16 16"><path d="M1.500 14.500V5.500h4l2 2h7v7z" fill="#efefef" stroke="#7c7f7a"/><path d="M1 1h5l1.500 1.500H15V4H8L6.500 3H1z" fill="#7c7f7a"/></symbol>
<symbol id="home" viewBox="0 0 16 16"><path d="M1.500 14V2.500h5l2 1h6V14z" fill="#efefef" stroke="#7c7f7a"/><path d="M4.500 9.500L8 6l3.500 3.500M5.500 9v3.500h5V9" fill="#fff" stroke="#333"/></symbol>
<symbol id="gpkg" viewBox="0 0 16 16"><path d="M1 5l7 3v7.500L1 12z" fill="#e2b91c" stroke="#4d3e00" stroke-width=".8"/><path d="M8 8l7-3v7l-7 3.500z" fill="#fff27a" stroke="#4d3e00" stroke-width=".8"/><circle cx="8" cy="4.500" r="4" fill="#4d7396" stroke="#2b4a66" stroke-width=".7"/><path d="M5.500 3l2 1-1 2M9.500 2l1.500 2-2 1" stroke="#d8e6f0" fill="none"/></symbol>
<symbol id="feather" viewBox="0 0 16 16"><path d="M1 15C1 7 6 2 15 1.500c-2 3-1 6-5 7.500C7 11 4 10 2.500 13z" fill="#7fa8d4" stroke="#2c4f78" stroke-width=".9"/><path d="M1 15C4 9 8 5 14 2" stroke="#2c4f78" stroke-width=".8" fill="none"/></symbol>
<symbol id="pg" viewBox="0 0 16 16"><path d="M1 6c-1-5 4-6 7-4.500C12 0 16 2 15.500 6S13 10 13.500 12L11 11c0 3 0 4-2 4.500S7 13 7 11l-3 .5C2 11 1.500 8 1 6z" fill="#4f80b8" stroke="#2a4c77" stroke-width=".9"/><path d="M5 3v6M10.500 3c1.500 3 .5 5 .5 8" stroke="#bdd2e8" stroke-width=".8" fill="none"/></symbol>
<symbol id="conn" viewBox="0 0 16 16"><path d="M3 8h5.500" stroke="#8f5902" stroke-width="1.800"/><path d="M13 4.800c-2 0-4 1-4 3.200s2 3.200 4 3.200" fill="none" stroke="#8f5902" stroke-width="1.800"/></symbol>
<symbol id="db" viewBox="0 0 16 16"><path d="M2.500 3.500C2.500 1.700 13.500 1.700 13.500 3.500v9c0 1.800-11 1.800-11 0z" fill="#f1f1f1" stroke="#7c7f7a"/><path d="M2.500 4.200c1 1.500 10 1.500 11 0M2.500 7.500c1 1.500 10 1.500 11 0M2.500 10.500c1 1.500 10 1.500 11 0" fill="none" stroke="#7c7f7a"/></symbol>
<symbol id="mssql" viewBox="0 0 16 16"><path d="M1 1l8 1c4 1 6 3 6.500 5C10 9 5 12 1 15c2-5 3-9 0-14z" fill="#5d86b0" stroke="#31557c" stroke-width=".8"/><path d="M5 2c2 4 1 7 0 10M9 2.500c2 3 1 5 .5 7" stroke="#c4d6e8" fill="none"/></symbol>
<symbol id="globe" viewBox="0 0 16 16"><circle cx="8" cy="8" r="7.300" fill="#6e8aa6" stroke="#3d5975"/><path d="M3 6c3-4 4 1 7-2M5 11c3-2 5 1 7-1" stroke="#dfe9f2" stroke-width="1.500" fill="none"/></symbol>
<symbol id="tif" viewBox="0 0 16 16"><path d="M1.500 1.500h13v13h-13z" fill="#a9c3e4"/><path d="M1.500 1.500h4.300v4.300H1.500zM10.200 1.500h4.300v4.300h-4.300zM5.800 5.800h4.400v4.400H5.800zM1.500 10.200h4.300v4.300H1.500z" fill="#243049"/><path d="M10.200 10.200h4.300v4.300h-4.300z" fill="#fff"/></symbol>
<symbol id="shp" viewBox="0 0 16 16"><path d="M2 13L8.500 3" stroke="#777"/><path d="M9 1.800h5" stroke="#777"/><g fill="#fff" stroke="#777" stroke-width=".9"><circle cx="2.300" cy="3.300" r="1.300"/><circle cx="2" cy="13" r="1.200"/><circle cx="8.700" cy="2.500" r="1.300"/><circle cx="13.700" cy="1.900" r="1.200"/></g><path d="M7 12c0-3 3-3 4-5s4-1 3.500 2-4 6-6 5.500S7 13.500 7 12z" fill="#ddd" stroke="#777"/></symbol>
<symbol id="poly" viewBox="0 0 16 16"><path d="M1 5c0-4 4-2 7-2s7-2 7.500 1 0 8-1.500 8.500S10 9 8 9s-3 3-5 2-2-3-2-6z" fill="#d4d4d4" stroke="#999" stroke-width=".6"/></symbol>
<symbol id="addl" viewBox="0 0 16 16"><path d="M1.500 1.500h11v11h-11z" fill="#f3f4f2" stroke="#777"/><rect x="9.500" y="9.500" width="5.500" height="5.500" rx="1" fill="#fff" stroke="#4c8250" stroke-width="1.400"/><path d="M12.200 11v2.500M11 12.200h2.500" stroke="#4c8250"/></symbol>
<symbol id="filter" viewBox="0 0 16 16"><path d="M1 3h14L10 8.500V15l-4 0V8.500z" fill="#5f8fc5" stroke="#3d6896" stroke-width=".7"/><path d="M1 .8h14v2.600H1z" fill="#fbe34a" stroke="#b8a21d" stroke-width=".6"/></symbol>
<symbol id="collapse" viewBox="0 0 16 16"><path d="M1.500 1v13M1.500 2h4M1.500 13h4" stroke="#777"/><path d="M4 5h3v3H4zM4 10.500h3v3H4z" fill="#fff" stroke="#f08a1d" stroke-width="1.200"/><path d="M11 .8l4.700 5H13V14H9V5.800H6.300z" fill="#4f7cb0" stroke="#28486e" stroke-width=".8"/></symbol>
<symbol id="float" viewBox="0 0 12 12"><rect x=".6" y=".6" width="10.800" height="10.800" rx="1.800" fill="none" stroke="#555" stroke-width="1.100"/><path d="M2.800 4.800h4.300v4.300H2.800zM4.800 4.500V2.800h4.400v4.300H7.500" fill="none" stroke="#444"/></symbol>
<symbol id="close" viewBox="0 0 12 12"><rect x=".6" y=".6" width="10.800" height="10.800" rx="1.800" fill="none" stroke="#555" stroke-width="1.100"/><path d="M3 3l6 6M9 3L3 9" stroke="#333" stroke-width="1.900"/></symbol>
</svg>

<nav class="menu"><span><u>P</u>roject</span><span><u>E</u>dit</span><span><u>V</u>iew</span><span><u>L</u>ayer</span><span><u>S</u>ettings</span><span><u>P</u>lugins</span><span>Vect<u>o</u>r</span><span><u>R</u>aster</span><span><u>D</u>atabase</span><span><u>W</u>eb</span><span><u>M</u>esh</span><span>Pro<u>c</u>essing</span><span><u>H</u>elp</span></nav>

<div class="bar">
<i class="h h0"></i><b class="t"><svg><use href="#new"/></svg></b><b class="t"><svg><use href="#open"/></svg></b><b class="t"><svg><use href="#save"/></svg></b><b class="t"><svg><use href="#layout"/><use href="#b-new"/></svg></b><b class="t"><svg><use href="#manager"/></svg></b><b class="t"><svg><use href="#style"/></svg></b>
<i class="h"></i><b class="t on"><svg><use href="#hand"/></svg></b><b class="t off"><svg><use href="#move"/></svg></b><b class="t"><svg><use href="#zin"/></svg></b><b class="t"><svg><use href="#zout"/></svg></b><b class="t"><svg><use href="#zfull"/></svg></b><b class="t off"><svg><use href="#zsel"/></svg></b><b class="t off"><svg><use href="#mag"/></svg></b><b class="t off"><svg><use href="#z11"/></svg></b><b class="t"><svg><use href="#zprev"/></svg></b><b class="t off"><svg><use href="#znext"/></svg></b><b class="t"><svg><use href="#map1"/></svg></b><b class="t"><svg><use href="#map3d"/></svg></b><b class="t"><svg><use href="#bmnew"/></svg></b><b class="t"><svg><use href="#bm"/></svg></b><b class="t"><svg><use href="#clock"/></svg></b><b class="t"><svg><use href="#refresh"/></svg></b>
<i class="h"></i><b class="t"><svg><use href="#ident"/></svg></b><b class="t off"><svg><use href="#abacus"/></svg></b><b class="t"><svg><use href="#gear"/></svg></b><b class="t"><svg><use href="#sigma"/></svg></b><b class="t off"><svg><use href="#table"/></svg></b><i class="a dim"></i><b class="t"><svg><use href="#ruler"/></svg></b><i class="a"></i><b class="t on"><svg><use href="#tip"/></svg></b><b class="t off"><svg><use href="#runact"/></svg></b><i class="a dim"></i>
<i class="h"></i><b class="t off"><svg><use href="#selrect"/></svg></b><i class="a dim"></i><b class="t off"><svg><use href="#selval"/></svg></b><i class="a dim"></i><b class="t"><svg><use href="#desel"/></svg></b><i class="a"></i><b class="t"><svg><use href="#selloc"/></svg></b><i class="a"></i>
<i class="h"></i><b class="t off"><svg><use href="#lab"/></svg></b><b class="t off"><svg><use href="#diag"/></svg></b><i class="s"></i><b class="t"><svg><use href="#labpin"/></svg></b><b class="t"><svg><use href="#labred"/></svg></b><i class="s"></i><b class="t off"><svg><use href="#labpin2"/></svg></b><b class="t off"><svg><use href="#labeye"/></svg></b><b class="t off"><svg><use href="#labmov"/></svg></b><b class="t off"><svg><use href="#labrot"/></svg></b><b class="t off"><svg><use href="#labedit"/></svg></b>
<i class="h"></i><b class="t"><svg><use href="#annlayer"/></svg></b><i class="a"></i><b class="t"><svg><use href="#annsel"/></svg></b><b class="t"><svg><use href="#annpoly"/></svg></b><b class="t"><svg><use href="#annline"/></svg></b><b class="t"><svg><use href="#annstar"/></svg></b><b class="t"><svg><use href="#anntext"/></svg></b><b class="t"><svg><use href="#anncurve"/></svg></b><i class="s"></i><b class="t"><svg><use href="#annhtml"/></svg></b><i class="a"></i>
</div>

<div class="bar">
<i class="h h0"></i><b class="t off menuable"><svg><use href="#pencils"/></svg></b><b class="t off"><svg><use href="#pencil"/></svg></b><b class="t off"><svg><use href="#saveedit"/></svg></b><b class="t off"><svg><use href="#linedig"/></svg></b><i class="a dim"></i><b class="t off"><svg><use href="#ptsnew"/></svg></b><b class="t off"><svg><use href="#vertex"/></svg></b><i class="a dim"></i><b class="t off"><svg><use href="#modattr"/></svg></b><b class="t off"><svg><use href="#trash"/></svg></b><b class="t off"><svg><use href="#cut"/></svg></b><b class="t off"><svg><use href="#copy"/></svg></b><b class="t off"><svg><use href="#paste"/></svg></b><b class="t off"><svg><use href="#undo"/></svg></b><b class="t off"><svg><use href="#redo"/></svg></b>
<i class="h"></i><b class="t"><svg><use href="#python"/></svg></b><b class="t"><svg><use href="#stack"/></svg></b><b class="t"><svg><use href="#checks"/></svg></b><b class="t"><svg><use href="#ring"/></svg></b><b class="t"><svg><use href="#clip"/></svg></b><b class="t"><svg><use href="#trace"/></svg></b><b class="t"><svg><use href="#earth"/></svg></b><b class="t"><svg><use href="#film"/></svg></b><b class="t"><svg><use href="#filmg"/></svg></b><b class="t"><svg><use href="#plot"/></svg></b><i class="a"></i>
<i class="h"></i><b class="t off"><svg><use href="#setsq"/></svg></b><b class="t off"><svg><use href="#ptsmov"/></svg></b><i class="a dim"></i><b class="t off"><svg><use href="#brot"/></svg></b><b class="t off"><svg><use href="#bmov"/></svg></b><b class="t off"><svg><use href="#bscale"/></svg></b><b class="t off"><svg><use href="#bring"/></svg></b><b class="t off"><svg><use href="#bpart"/></svg></b><b class="t off"><svg><use href="#bring"/></svg></b><b class="t off"><svg><use href="#bringx"/></svg></b><b class="t off"><svg><use href="#bpartx"/></svg></b><b class="t off"><svg><use href="#breshape"/></svg></b><b class="t off"><svg><use href="#boff"/></svg></b><b class="t off"><svg><use href="#vertrot"/></svg></b><b class="t off"><svg><use href="#trim"/></svg></b><b class="t off"><svg><use href="#bcut"/></svg></b><b class="t off"><svg><use href="#bcut"/></svg></b><b class="t off"><svg><use href="#bmerge"/></svg></b><b class="t off"><svg><use href="#bedges"/></svg></b><b class="t off"><svg><use href="#brotpt"/></svg></b><i class="a dim"></i>
</div>

<div class="bar">
<i class="h h0"></i><b class="t"><svg><use href="#magnet"/></svg></b><b class="t off menuable"><svg><use href="#snapv"/></svg></b><b class="t on grey menuable"><svg><use href="#snapt"/></svg></b><div class="field spin tol"><span>12</span><i class="updn dim"></i></div><div class="field combo"><span>px</span><i class="a dim"></i></div><b class="t"><svg><use href="#topo"/></svg></b><b class="t menuable"><svg><use href="#overlap"/></svg></b><b class="t off"><svg><use href="#cross"/></svg></b><b class="t off"><svg><use href="#selfs"/></svg></b><i class="a dim"></i><b class="t off"><svg><use href="#zig"/></svg></b>
<i class="h"></i><b class="t"><svg><use href="#mergin"/></svg></b><b class="t"><svg><use href="#gearo"/></svg></b><b class="t"><svg><use href="#addbox"/></svg></b><b class="t"><svg><use href="#sync"/></svg></b>
<i class="h"></i><b class="t"><svg><use href="#gsearch"/></svg></b><b class="t"><svg><use href="#osm"/></svg></b>
<i class="h"></i><b class="t"><svg><use href="#cloud"/></svg></b><b class="t off"><svg><use href="#cloudsync"/></svg></b><i class="s"></i><b class="t"><svg><use href="#boxdn"/></svg></b><b class="t"><svg><use href="#boxup"/></svg></b><i class="s"></i><b class="t"><svg><use href="#hammer"/></svg></b>
<i class="h"></i><b class="t"><svg><use href="#flagp"/></svg></b><b class="t off"><svg><use href="#target"/></svg></b><i class="s"></i><b class="t menuable"><svg><use href="#targetsel"/></svg></b><b class="t off"><svg><use href="#targetadd"/></svg></b><b class="t off"><svg><use href="#vertnew"/></svg></b><b class="t off"><svg><use href="#ptsel"/></svg></b><i class="s"></i><b class="t"><svg><use href="#info"/></svg></b><b class="t"><svg><use href="#wrench"/></svg></b>
<i class="h"></i><i class="h hs"></i><b class="t"><svg><use href="#pages"/></svg></b>
<i class="h"></i><b class="t"><svg><use href="#nib"/></svg></b><b class="t"><svg><use href="#rsel"/></svg></b><b class="t"><svg><use href="#rsel2"/></svg></b><b class="t off"><svg><use href="#wand"/><use href="#b-x"/></svg></b><b class="t"><svg><use href="#wand"/></svg></b><b class="t"><svg><use href="#book"/></svg></b><b class="t"><svg><use href="#nibq"/></svg></b>
</div>

<main class="work">
<section class="dock left">
<header><span>Browser</span><svg><use href="#float"/></svg><svg><use href="#close"/></svg></header>
<div class="dtools"><svg><use href="#addl"/></svg><svg><use href="#refresh"/></svg><svg><use href="#filter"/></svg><svg><use href="#collapse"/></svg><svg><use href="#info"/></svg></div>
<div class="tree">
<ul>
<li><i class="o"></i><svg><use href="#star"/></svg>Favorites</li>
<li class="l1"><i></i><svg><use href="#foldl"/></svg>/home/timlinux/Downloads/qgis_hydrological_data</li>
<li class="l1"><i class="o"></i><svg><use href="#foldl"/></svg>/home/timlinux/gisdata</li>
<li class="l2"><i class="c"></i><svg><use href="#fold"/></svg>Wolfgang</li>
<li class="l1"><i class="c"></i><svg><use href="#fold"/></svg>/home/timlinux/gisdata/MerginSyncProjects</li>
<li class="l1"><i class="c"></i><svg><use href="#fold"/></svg>/home/timlinux/gisdata/MerginSyncProjects/farming</li>
<li class="l1"><i class="c"></i><svg><use href="#foldl"/></svg>/home/timlinux/Syncthing/MalawiGIS</li>
<li class="l1"><i class="o"></i><svg><use href="#foldl"/></svg>/home/timlinux/Syncthing/QGISProjects/30DayMap</li>
<li class="l2"><i class="c"></i><svg><use href="#fold"/></svg>1-Points</li>
<li><i class="c"></i><svg><use href="#bm"/></svg>Spatial Bookmarks</li>
<li><i class="c"></i><svg><use href="#home"/></svg>Home</li>
<li><i class="c"></i><svg><use href="#fold"/></svg>/</li>
<li><i class="c"></i><svg><use href="#gpkg"/></svg>GeoPackage</li>
<li><i></i><svg><use href="#feather"/></svg>SpatiaLite</li>
<li><i class="o"></i><svg><use href="#pg"/></svg>PostgreSQL</li>
<li class="l1"><i class="c"></i><svg><use href="#conn"/></svg>farming</li>
<li class="l1"><i class="c"></i><svg><use href="#conn"/></svg>geoservices.govt.lc - gis</li>
<li class="l1"><i class="c"></i><svg><use href="#conn"/></svg>geoservices.govt.lc - playground</li>
<li class="l1"><i class="c"></i><svg><use href="#conn"/></svg>geoservices.govt.lc - tim</li>
<li class="l1"><i class="o"></i><svg><use href="#conn"/></svg>localhost - gis</li>
<li class="l2 sel"><i></i><svg><use href="#db"/></svg>public</li>
<li class="l1"><i class="c"></i><svg><use href="#conn"/></svg>mergin dbsync demo</li>
<li class="l1"><i class="c"></i><svg><use href="#conn"/></svg>OSGS Localhost</li>
<li class="l1"><i class="c"></i><svg><use href="#conn"/></svg>osgs.kartoza.com</li>
<li class="l1"><i class="c"></i><svg><use href="#conn"/></svg>osgs.kartoza.com - farming</li>
<li class="l1"><i class="c"></i><svg><use href="#conn"/></svg>osgs.kartoza.com - kart</li>
<li class="l1"><i class="c"></i><svg><use href="#conn"/></svg>postgis.kartoza.com - kartozagis</li>
<li class="l1"><i class="c"></i><svg><use href="#conn"/></svg>staging.rir.kartoza.com - django</li>
<li class="l1"><i class="c"></i><svg><use href="#conn"/></svg>StLucia LRTP</li>
<li class="l1"><i class="c"></i><svg><use href="#conn"/></svg>tegola-testbed</li>
<li class="l1"><i class="c"></i><svg><use href="#conn"/></svg>viki.kartoza.com</li>
<li><i></i><svg><use href="#mssql"/></svg>MS SQL Server</li>
<li><i class="c"></i><svg><use href="#mergin"/></svg>Mergin Maps [timlinux]</li>
<li><i class="c"></i><svg><use href="#cloud"/></svg>QFieldCloud</li>
<li><i class="c"></i><svg><use href="#globe"/></svg>WMS/WMTS</li>
</ul>
<div class="vs"><i class="up"></i><b class="th th-left"></b><em></em><i class="dn"></i></div>
<div class="hs2"><i class="lt"></i><b class="th tw-left"></b><em></em><i class="rt"></i></div><div class="corner"></div>
</div>
<div class="tabs tabs-left"><span>Advanced Digitiz…</span><span>Vertex Edi…</span><span class="act">Brow…</span><span>Lay…</span></div>
</section>

<div class="split"></div>

<section class="center">
<div class="msg"><svg class="bubble" viewBox="0 0 20 20"><path d="M3 1.500h14a2.500 2.500 0 0 1 2.500 2.500v7a2.500 2.500 0 0 1-2.500 2.500h-5c-1 3-3 5-6 5 1-1.500 1.500-3 1-5H3A2.500 2.500 0 0 1 .5 11V4A2.500 2.500 0 0 1 3 1.500z" fill="#fdfdfd" stroke="#888"/></svg><p>Multiple plugin updates are available</p><button>Install Updates…</button><svg class="dismiss" viewBox="0 0 18 18"><circle cx="9" cy="9" r="8.700" fill="#2e3436"/><path d="M5.500 5.500l7 7M12.500 5.500l-7 7" stroke="#fff" stroke-width="2.600"/></svg></div>
<div class="views">
<div class="list">
<div class="cards">
<article class="c1"><div class="thumb yellow"></div><div class="txt"><h2>blantyre</h2><p>/home/timlinux/<br>Syncthing/<br>MalawiGIS/shp for<br>blantyre/<br>blantyre.qgs<br>EPSG:3857 (EPSG:<br>3857 - WGS 84 /<br>Pseudo-Mercator)</p></div></article>
<article class="c2"><div class="txt"><h2>overall_ flood</h2><p><span class="path">/home/timlinux/Syncthing/MalawiGIS/Analysis</span><br>projects/flood/overall_ flood.qgs<br><span class="crsline">EPSG:32736 (EPSG:32736 - WGS 84 / UTM zone 36S)</span></p></div></article>
<article class="c3"><svg class="thumb" viewBox="66 30 750 531" preserveAspectRatio="none"><path d="M66 30h750v531H66z" fill="#fff"/>
<g fill="#f00" stroke="#f00" stroke-width="22" stroke-linecap="round" stroke-dasharray=".1 19"><path d="M223 30H605l-16 30-10 20 20 25-10 25-30-10-30-15-30 10-20 30-40 5-30-15-60 20-15 25-35 10-35-10-25-20-45-15 20-25 20-10 5-15-30-10 5-15 30-5z"/><path d="M620 30H816V220l-30 5 10-40-10-25-45-5-16-35 15-25 28-5-20-25-40 10-50-15z"/><path d="M70 260l26-5 34 20-5 20-25-5-30-10z"/><path d="M160 256l50-6 60-4 50 5 10 10-40 10-15 12-15-12-90-8z"/><path d="M700 375l40-10 65-14 11 4v42l-50 2-40-8z"/></g>
<g fill="none" stroke="#f00" stroke-width="24" stroke-linecap="round" stroke-dasharray=".1 14"><path d="M78 45l8 10 45 8M86 70l2 30-14 25-6 40M175 75l50 8M168 134l40 22 45-4M245 180h80M255 150l68 15-8-25M348 183v25h-5M285 185h30M420 150v20M470 150l10 15M728 200v18M770 230l35-8"/><path d="M118 300v8M120 355l5 6M265 305h16M455 330l-8 25M510 352l15 2M540 350h35M610 330l20 15 25-5 25 8M590 345h35M640 370l25 10M690 380l30 20"/><path d="M540 300v12M195 545h45l0-12M200 556h45M305 537h50M342 528v20M315 552h40M410 547l45 4M400 558h50M470 546h48M480 558h35M580 537h100M640 530v20M605 550h60M315 485l36 5M335 495h18"/></g>
<g fill="#f00"><circle cx="102" cy="159" r="12"/><circle cx="234" cy="207" r="12"/><circle cx="372" cy="150" r="12"/><circle cx="390" cy="198" r="12"/><circle cx="414" cy="183" r="12"/><circle cx="498" cy="207" r="12"/><circle cx="537" cy="192" r="12"/><circle cx="537" cy="116" r="12"/><circle cx="717" cy="198" r="12"/><circle cx="753" cy="192" r="12"/><circle cx="150" cy="296" r="12"/><circle cx="201" cy="306" r="12"/><circle cx="267" cy="363" r="12"/><circle cx="291" cy="363" r="12"/><circle cx="243" cy="420" r="12"/><circle cx="168" cy="480" r="12"/><circle cx="144" cy="528" r="12"/><circle cx="291" cy="495" r="12"/><circle cx="366" cy="480" r="12"/><circle cx="564" cy="316" r="12"/><circle cx="537" cy="312" r="12"/><circle cx="693" cy="350" r="12"/></g>
<g fill="none" stroke="#f00" stroke-opacity=".27" stroke-width="23" stroke-linecap="round"><path stroke-dasharray=".1 29" d="M300 245l60-12 30 35 60 0 20-20 100-8 50 30 100-5 90 15"/><path stroke-dasharray=".1 27" d="M310 262l60 0 30 25 70-15 80-20 60 25 80 20 120-10"/><path stroke-dasharray=".1 26" d="M470 260l70-10 60 30 100-20 110 25"/><path stroke-dasharray=".1 28" d="M480 280l90-10 60 25 90-20 90 5"/><path stroke-dasharray=".1 25" d="M405 290l60 12 40-22 60 12 70 0 80 10 100 0"/></g>
<g fill="none" stroke="#f00" stroke-opacity=".42" stroke-width="24" stroke-linecap="round"><path stroke-dasharray=".1 25" d="M310 258l50-12 25 30 40 25 50-35 60 5 30 15 60 5 50 10 40 15 90 10"/><path stroke-dasharray=".1 25" d="M715 300l100-12M410 305l50 15M470 190l15-45 20 25M465 240h2M760 338h1"/><path stroke-dasharray=".1 25" d="M720 285l95-12M735 312l80-8M500 262l90 15M330 254l40 0M455 120l40 10"/></g>
</svg><div class="txt"><h2>wolfgang</h2><p>/home/timlinux/<br>gisdata/Wolfgang/<br>wolfgang.qgz<br>EPSG:4326 (EPSG:<br>4326 - WGS 84)</p></div></article>
<article class="c4"><svg class="thumb" viewBox="66 627 750 531" preserveAspectRatio="none"><defs><pattern id="sea" width="11" height="11" patternUnits="userSpaceOnUse"><rect width="11" height="11" fill="#c8d8e2"/><path d="M0 .5H11M.5 0V11" stroke="#d6e4ec" stroke-width="2"/></pattern></defs><path d="M66 627h750v531H66z" fill="url(#sea)"/>
<g fill="#d8dbd1" stroke="#85877f" stroke-width="3" stroke-linejoin="round"><path d="M165 620l-6 30 8 40-5 28 24 22 12 26 25 22 18 9 32-8 30 1 35-12 20 18 24-6 8 8 4 18-6 22 22 30 14 15 6 38-20 66 14 30 14 58 20 35 4 50 50 4 42-22 42-40 22-46-4-20 44-34 4-20-14-28-8-45 40-52 44-44 26-40 6-20-50 10-26-4-10-28-26-30-16-55z"/><path d="M645 620l4 26 32 38 8 36 46-10 60-26 21-26v-38z"/><path d="M738 943l10 22-22 82-20 9-16-18 8-50z"/></g>
<g fill="none" stroke="#85877f" stroke-width="3" stroke-linejoin="round"><path d="M162 645h30v-20M250 627l10 70-95-6M285 627l61 36-4 30-45 10-38 35-40-15-20-23-36-12M346 663l90-33 8 30-8 54-94 0 0-20M444 630l75 28-15 50-4 34-55-26M526 640h105M526 640l-6 22M519 720l16 30 50-6 20-30 30-6 10-28M500 742l-28 20 -30 25-50 12M436 714l-6 30-20 35-12 35 28 5 38-5 14-18 62-6 50 10 16-6M342 714l-12 66M322 740v40M315 740l4 40M284 740l-5 47M250 738l-10 52M210 730l-10 20 16 20M170 715l30 10 5 20M230 740l90-5M605 714l-20 30 25 50M610 794l50 10 30-15 50-45-50-22-20-15M660 804l-10 30 10 20M580 800l-15 60 5 40 30 30M410 830l30-10 26-5-10 40-15 20-35 0M418 882h35l6 18 35-2 8 34 18 2v25l-20 3 0 26-90-2-15-3M520 935l40 10 5-35 25-10M500 990l70-20 30-30 20 35-8 25M570 970l20 25 20 15M490 990l-4 80M520 990l25 15 40-10M600 1000l-5 50M556 905l10 30 45 10M688 685l40-10 30 12M790 627l-5 30-20 20"/></g>
<g fill="#dae8e6"><circle cx="632" cy="842" r="57"/><circle cx="652" cy="892" r="57"/><circle cx="724" cy="1000" r="57"/><circle cx="552" cy="1060" r="58"/><circle cx="566" cy="1063" r="58"/><circle cx="470" cy="1129" r="58"/></g>
<g fill="#ddae4b"><circle cx="632" cy="842" r="34"/><circle cx="652" cy="892" r="34"/><circle cx="724" cy="1000" r="34"/><circle cx="552" cy="1060" r="35"/><circle cx="567" cy="1063" r="35"/><circle cx="471" cy="1131" r="37"/></g>
<path d="M85 685h5M97 688h8M93 700h6M368 820h4M363 832h4M180 902h4M257 973h4M712 915h3M795 873h4M795 1018h4M810 1012h4M765 725l20-3M198 1156h4" stroke="#85877f" stroke-width="4"/>
</svg><div class="txt"><h2>KartozaAnima<br>tedMap</h2><p>/home/timlinux/<br>Syncthing/<br>KartozaInternal/<br>QGISProjects/<br>KartozaAnimatedM<br>ap/</p></div></article>
</div>
<div class="vs"><i class="up"></i><b class="th th-mid"></b><em></em><i class="dn"></i></div>
<div class="hs2"><i class="lt"></i><b class="th tw-mid"></b><em></em><i class="rt"></i></div><div class="corner"></div>
</div>
<div class="split thin"></div>
<div class="tmpl">
<svg class="hidden-head" width="536" height="10"><path d="M62 .5h2M180 .5h4" stroke="#2e3436"/></svg>
<div class="pane"><article class="empty"><div class="blank"><svg viewBox="0 0 210 137"><path d="M.5.500h209v136H.5z" fill="none" stroke="#c6c6c6" stroke-dasharray="4 2"/></svg></div><div class="txt"><h2>New Empty Project</h2><p class="crsline">EPSG:4326 - WGS 84</p></div></article></div>
</div>
</div>
</section>

<div class="split wide"></div>

<section class="dock right">
<header><span>Browser (2)</span><svg><use href="#float"/></svg><svg><use href="#close"/></svg></header>
<div class="dtools"><svg><use href="#addl"/></svg><svg><use href="#refresh"/></svg><svg><use href="#filter"/></svg><svg><use href="#collapse"/></svg><svg><use href="#info"/></svg></div>
<div class="tree">
<ul>
<li><i class="c"></i><svg><use href="#fold"/></svg>new nulls</li>
<li><i class="c"></i><svg><use href="#fold"/></svg>weird flood</li>
<li><i class="c"></i><svg><use href="#db"/></svg>fid_1.gpkg</li>
<li><i class="c"></i><svg><use href="#db"/></svg>fid_10.gpkg</li>
<li><i class="c"></i><svg><use href="#db"/></svg>fid_11.gpkg</li>
<li><i class="c"></i><svg><use href="#db"/></svg>fid_13.gpkg</li>
<li><i class="c"></i><svg><use href="#db"/></svg>fid_14.gpkg</li>
<li><i class="c"></i><svg><use href="#db"/></svg>fid_15.gpkg</li>
<li><i class="c"></i><svg><use href="#db"/></svg>fid_16.gpkg</li>
<li><i class="c"></i><svg><use href="#db"/></svg>fid_17.gpkg</li>
<li><i class="c"></i><svg><use href="#db"/></svg>fid_18.gpkg</li>
<li><i class="c"></i><svg><use href="#db"/></svg>fid_19.gpkg</li>
<li><i class="c"></i><svg><use href="#db"/></svg>fid_2.gpkg</li>
<li><i class="c"></i><svg><use href="#db"/></svg>fid_20.gpkg</li>
<li><i class="c"></i><svg><use href="#db"/></svg>fid_21.gpkg</li>
<li><i class="c"></i><svg><use href="#db"/></svg>fid_22.gpkg</li>
<li><i class="c"></i><svg><use href="#db"/></svg>fid_23.gpkg</li>
<li><i class="c"></i><svg><use href="#db"/></svg>fid_3.gpkg</li>
<li><i class="c"></i><svg><use href="#db"/></svg>fid_4.gpkg</li>
<li><i class="c"></i><svg><use href="#db"/></svg>fid_5.gpkg</li>
<li><i class="c"></i><svg><use href="#db"/></svg>fid_6.gpkg</li>
<li><i class="c"></i><svg><use href="#db"/></svg>fid_7.gpkg</li>
<li><i class="c"></i><svg><use href="#db"/></svg>fid_8.gpkg</li>
<li><i class="c"></i><svg><use href="#db"/></svg>fid_9.gpkg</li>
<li><i class="c"></i><svg><use href="#db"/></svg>flood_hazard_aggregation_summary.gpkg</li>
<li><i></i><svg><use href="#tif"/></svg>flood_tblsh.tif</li>
<li><i class="c"></i><svg><use href="#shp"/></svg>hazary_aggregation_summary_flood.shp</li>
<li><i class="o"></i><svg><use href="#db"/></svg>manual_hazard_aggregation.gpkg</li>
<li class="l1 sel"><i class="c"></i><svg><use href="#poly"/></svg>hazard_aggregation_manual</li>
<li><i class="c"></i><svg><use href="#shp"/></svg>manual_hazard_aggregation_summary.shp</li>
<li><i class="c"></i><svg><use href="#shp"/></svg>NonRes.shp</li>
<li><i class="c"></i><svg><use href="#db"/></svg>NonRes.xml</li>
<li><i class="c"></i><svg><use href="#shp"/></svg>Res.shp</li>
<li><i class="c"></i><svg><use href="#db"/></svg>Res.xml</li>
<li><i class="c"></i><svg><use href="#shp"/></svg>rwebsatl0030.shp</li>
</ul>
<div class="vs"><i class="up"></i><em class="pre"></em><b class="th th-right"></b><em></em><i class="dn"></i></div>
<div class="hs2"><i class="lt"></i><b class="th tw-right"></b><em></em><i class="rt"></i></div><div class="corner"></div>
</div>
<div class="tabs tabs-right"><span>Ina…</span><span>Res…</span><span class="act">B…</span><span>Debugging/Develop…</span><span>Processin…</span><span>La…</span></div>
</section>
</main>

<footer class="status">
<div class="field locate"><svg viewBox="0 0 16 16"><circle cx="6.500" cy="6.500" r="5" fill="none" stroke="#888" stroke-width="1.300"/><path d="M10 10l5 5" stroke="#888" stroke-width="1.500"/></svg>Type to locate (Ctrl+K)</div>
<span class="ready">Ready</span>
<span class="lbl coord">Coordinate</span><div class="field cbox"></div>
<svg class="mouse" viewBox="0 0 16 16"><path d="M2 3l5-1 4 3 3 5-2 4-4 1-4-4z" fill="#222"/><path d="M2 2l10 12M5 1l8 10M1 6l8 9" stroke="#ddd" stroke-width=".8"/><path d="M11 4l3-3M12.500 5l3-2M1 8l1 3M2 1l2 2" stroke="#333" stroke-width="1.200"/><circle cx="9.500" cy="11.500" r="2.500" fill="#fff" stroke="#222"/></svg>
<span class="lbl scale">Scale</span><div class="field sc"><span>1:29854292</span><i class="drop"></i></div>
<svg class="lock" viewBox="0 0 14 16"><path d="M3.500 8V5a3.500 3.500 0 0 1 7 0v3" fill="none" stroke="#777" stroke-width="1.800"/><path d="M1 7.500h12V15a1 1 0 0 1-1 1H2a1 1 0 0 1-1-1z" fill="#5c5c5c"/></svg>
<span class="lbl mg">Magnifier</span><div class="field spin m"><span>100%</span><i class="updn"></i></div>
<span class="lbl rot">Rotation</span><div class="field spin r"><span>0.0 °</span><i class="updn"></i></div>
<svg class="chk" viewBox="0 0 14 14"><path d="M.5.500h13v13H.5z" fill="#fff" stroke="#999"/><path d="M3.500 7l2.500 3.500L10.500 3" fill="none" stroke="#222" stroke-width="1.900"/></svg><span class="lbl rn">Render</span>
<svg class="crs" viewBox="0 0 16 16"><path d="M1.500 8L5 2h6l3.500 6L11 14H5z" fill="#bbb" stroke="#666"/><path d="M1 5.500h14M0 8h16M1 10.500h14M8 1v14M5 2C3 6 3 10 5 14M11 2c2 4 2 8 0 12" fill="none" stroke="#666" stroke-width=".8"/></svg><span class="epsg">EPSG:4326</span>
<svg class="log" viewBox="0 0 18 16"><path d="M9 1c5 0 8 2.500 8 6s-1 4.500-3 5.500L15 15l-4-1.500C4 14 1 11 1 7s3-6 8-6z" fill="#4a4a4a"/><path d="M4.500 7h2M8 7h2M11.500 7h2" stroke="#fff" stroke-width="2"/></svg>
</footer>

<svg class="pointer" viewBox="0 0 1914 990"><path d="M168 621L1406 785.500" stroke="#f00" stroke-width="3"/><path d="M145.500 617.500L170 613.300 168 629z" fill="#f00"/></svg>
</body>
</html>
```
FILE: styles.css
```css
* { box-sizing: border-box; }
body {
  margin: 0; width: 1914px; height: 990px; overflow: hidden;
  display: flex; flex-direction: column; position: relative;
  background: #f6f5f4; color: #2e3436;
  font: 14.1px "Noto Sans", sans-serif;
}
b, i, em { font-style: normal; font-weight: 400; display: block; flex: none; }
svg { display: block; flex: none; }
.sprite { display: none; }

/* menu */
.menu { height: 22px; flex: none; display: flex; gap: 14.700px; padding-left: 10.500px; border-bottom: 1px solid #d9d7d5; font-size: 14.300px; line-height: 20px; white-space: nowrap; }
.menu u { text-underline-offset: 3px; text-decoration-thickness: 1px; }

/* toolbars */
.bar { height: 39px; flex: none; display: flex; align-items: center; border-bottom: 1px solid #b6b6b3; background: linear-gradient(#fefefe, #f4f3f2); }
.t { width: 33px; height: 32px; display: grid; place-items: center; position: relative; }
.t svg { width: 24px; height: 24px; }
.off svg { opacity: .33; filter: grayscale(.4); }
.on { width: 32px; margin-right: 1px; border: 1px solid #a9a9a6; border-radius: 3px; background: #e0dfde; }
.on.grey { background: #dcdbda; border-color: #c0bfbd; }
.menuable::after { content: ""; position: absolute; right: 3px; bottom: 2px; border: 3px solid transparent; border-top: 4px solid #888; border-bottom: 0; }
.h { width: 16.500px; height: 18px; background: radial-gradient(circle, #b5b5b5 .7px, transparent .9px) right 3.500px top 0 / 3px 3px repeat-y, radial-gradient(circle, #b5b5b5 .7px, transparent .9px) right 6.500px top 0 / 3px 3px repeat-y; }
.h0 { width: 12px; }
.hs { width: 15px; }
.s { width: 7px; height: 28px; background: linear-gradient(#d5d4d2, #d5d4d2) 3px 0 / 1px 100% no-repeat; }
.a { width: 11.700px; height: 5px; background: #666; clip-path: polygon(18% 0, 82% 0, 50% 100%); }
.a.dim { background: #aaa; }

.field { background: #fff; border: 1px solid #b6b6b3; border-radius: 3px; display: flex; align-items: center; }
.tol, .combo { height: 26px; color: #8b8e8f; }
.tol { width: 107px; margin: 0 1px; padding-left: 4px; }
.combo { width: 108px; margin-right: 2px; padding: 0 5px; justify-content: space-between; }
.spin { justify-content: space-between; }
.updn { width: 14px; align-self: stretch; border-left: 1px solid #c9c8c6; display: grid; align-content: center; justify-content: center; gap: 6px; }
.updn::before, .updn::after { content: ""; border: 4px solid transparent; }
.updn::before { border-bottom: 4px solid #777; border-top: 0; }
.updn::after { border-top: 4px solid #777; border-bottom: 0; }
.updn.dim::before { border-bottom-color: #aaa; }
.updn.dim::after { border-top-color: #aaa; }

/* docks */
.work { height: 821px; flex: none; display: flex; overflow: hidden; }
.dock { height: 821px; display: flex; flex-direction: column; overflow: hidden; flex: none; }
.left { width: 404px; }
.right { width: 520px; }
.dock header { height: 21px; margin-bottom: 1px; flex: none; display: flex; align-items: center; gap: 2px; padding-left: 4px; font-size: 14.300px; }
.right header { padding-left: 4.500px; margin-right: -4px; }
.dock header span { flex: 1; }
.dock header svg { width: 12px; height: 12px; }
.left header svg:last-child { margin-right: 2px; }
.dtools { height: 30px; flex: none; display: flex; align-items: center; gap: 9px; padding: 0 0 2px 8px; }
.dtools svg { width: 16px; height: 16px; }
.tree { height: 738px; flex: none; border: 1px solid #b6b6b3; background: #fff; display: grid; grid-template: 722px 14px / 1fr 14px; }
.right .tree { width: 526px; }
ul { margin: 0; padding: 0; list-style: none; overflow: hidden; }
li { height: 21px; display: flex; align-items: center; white-space: nowrap; padding-left: 3px; line-height: 21px; }
li.l1 { padding-left: 19px; }
li.l2 { padding-left: 35px; }
.right li { padding-left: 67px; }
.right li.l1 { padding-left: 83px; }
li svg { width: 16px; height: 16px; margin-right: 6px; }
.right li svg { margin-right: 6.500px; }
li i { width: 10px; height: 10px; margin-right: 6px; position: relative; }
.right li i { margin-right: 5.500px; }
.c::before, .o::before { content: ""; position: absolute; border: 4px solid transparent; }
.c::before { left: 2px; top: 1px; border-left: 5px solid #777; border-right: 0; }
.o::before { left: 1px; top: 3px; border-top: 4px solid #777; border-bottom: 0; }
.sel { background: #3584e4; color: #fff; }
.sel .c::before { border-left-color: #1d4a80; }

.vs { border-left: 1px solid #b6b6b3; display: flex; flex-direction: column; background: #ebebea; overflow: hidden; }
.hs2 { border-top: 1px solid #b6b6b3; display: flex; background: #ebebea; }
.corner { background: #f6f5f4; border-left: 1px solid #d5d4d2; border-top: 1px solid #d5d4d2; }
.vs i, .hs2 i { background: #fafafa; position: relative; }
.vs i { height: 14px; }
.hs2 i { width: 14px; }
.vs em, .hs2 em { flex: 1; }
.vs .pre { flex: none; height: 33px; }
.th { background: linear-gradient(90deg, #fff, #f4f3f2); border: 0 solid #b6b6b3; }
.vs .th { border-width: 1px 0; }
.hs2 .th { border-width: 0 1px; background: linear-gradient(#fff, #f4f3f2); }
.th-left { height: 244px; }
.th-mid { height: 134px; }
.th-right { height: 130px; }
.tw-left { width: 225px; }
.tw-mid { width: 371px; }
.tw-right { width: 393px; }
.up::before, .dn::before, .lt::before, .rt::before { content: ""; position: absolute; border: 4px solid transparent; }
.up::before { left: 2px; top: 5px; border-bottom-color: #777; border-top: 0; }
.dn::before { left: 2px; top: 5px; border-top-color: #777; border-bottom: 0; }
.lt::before { left: 4px; top: 2px; border-right-color: #777; border-left: 0; }
.rt::before { left: 4px; top: 2px; border-left-color: #777; border-right: 0; }
.dn { border-top: 1px solid #b6b6b3; }
.rt { border-left: 1px solid #b6b6b3; }

.tabs { margin-top: 1px; display: flex; align-items: flex-start; white-space: nowrap; letter-spacing: .2px; }
.tabs span { height: 27px; flex: none; border: 1px solid #bfbebc; border-left-width: 0; border-radius: 0 0 3px 3px; background: #e4e3e1; text-align: center; line-height: 26px; overflow: hidden; }
.tabs span:first-child { border-left-width: 1px; }
.tabs .act { height: 29px; background: #fbfbfa; border-top-color: #fbfbfa; line-height: 28px; }
.tabs-left span:nth-child(1) { width: 154px; }
.tabs-left span:nth-child(2) { width: 109px; }
.tabs-left span:nth-child(3) { width: 77px; }
.tabs-left span:nth-child(4) { width: 64px; }
.tabs-right span:nth-child(1) { width: 64px; }
.tabs-right span:nth-child(2) { width: 71px; }
.tabs-right span:nth-child(3) { width: 51px; }
.tabs-right span:nth-child(4) { width: 181px; }
.tabs-right span:nth-child(5) { width: 103px; }
.tabs-right span:nth-child(6) { width: 56px; }

.split { width: 6px; flex: none; background: radial-gradient(circle, #aaa .7px, transparent .9px) 2px 404px / 3px 3px no-repeat, radial-gradient(circle, #aaa .7px, transparent .9px) 2px 408px / 3px 3px no-repeat, radial-gradient(circle, #aaa .7px, transparent .9px) 2px 412px / 3px 3px no-repeat; }
.thin { width: 4px; }
.wide { width: 6px; }

/* welcome page */
.center { width: 978px; flex: none; display: flex; flex-direction: column; }
.msg { height: 42px; flex: none; border: 1px solid #b3cde3; background: #e5f4fd; display: flex; align-items: center; padding: 0 22px 2px 11px; }
.msg p { margin: 0 auto 0 12px; color: #2a50a4; font-size: 14px; }
.bubble { width: 20px; height: 20px; }
.msg button { width: 123px; height: 27px; margin-right: 32px; border: 1px solid #acacaa; border-radius: 3px; background: linear-gradient(#fff, #f4f3f2); font: inherit; color: inherit; padding: 0; letter-spacing: .15px; white-space: nowrap; }
.dismiss { width: 18px; height: 18px; }
.views { display: flex; flex: 1; }
.list { width: 438px; margin-top: 5px; height: 774px; border: 1px solid #b6b6b3; background: #fff; display: grid; grid-template: 758px 14px / 1fr 14px; overflow: hidden; }
.cards { overflow: hidden; padding: 5px 0 0 5px; }
article { background: #f6f5f4; border-radius: 9px; display: flex; }
.cards article { width: 450px; margin-bottom: 12px; padding: 6px; }
.c1 { height: 219px; }
.c2 { height: 119px; }
.c3 { height: 187px; }
.c4 { height: 260px; }
.thumb { width: 250px; height: 177px; border-radius: 8px; flex: none; }
.yellow { background: #ff0; }
.txt { padding: 10px 0 0 21px; white-space: nowrap; }
.c2 .txt { padding-left: 10px; }
h2 { margin: 0; font-size: 20px; line-height: 29px; font-weight: 600; letter-spacing: .95px; }
.txt p { margin: 1px 0 0; font-size: 16.300px; line-height: 20px; }
.txt .path { letter-spacing: -.13px; }
.txt .crsline { letter-spacing: .17px; }
.tmpl { width: 536px; }
.hidden-head { height: 9px; }
.pane { height: 770px; border: 1px solid #b6b6b3; background: #fff; padding: 5px; }
.empty { width: 522px; height: 187px; padding: 6px; }
.blank { width: 250px; height: 177px; border-radius: 8px; background: #fff; display: grid; place-items: center; }
.blank svg { width: 210px; height: 137px; }
.txt p.crsline { margin-top: 21px; letter-spacing: .32px; }

/* status bar */
.status { height: 30px; flex: none; display: flex; align-items: center; font-size: 12px; white-space: nowrap; padding-top: 3px; }
.status > * { flex: none; }
.lbl, .ready { font-size: 11.600px; }
.locate { width: 266px; height: 27px; margin-left: 4px; padding-left: 8px; gap: 8px; font-size: 14.100px; color: #8b8e8f; }
.locate svg { width: 13px; height: 13px; }
.ready { width: 833px; padding-left: 8px; }
.coord { width: 63px; }
.cbox { width: 44px; height: 23px; }
.mouse { width: 16px; height: 16px; margin: 0 13px 0 4px; }
.scale { width: 32px; }
.sc { width: 101px; height: 27px; padding-left: 4px; justify-content: space-between; }
.drop { width: 20px; align-self: stretch; border-left: 1px solid #c9c8c6; display: grid; place-items: center; }
.drop::before { content: ""; border: 4px solid transparent; border-top: 5px solid #777; border-bottom: 0; }
.lock { width: 13px; height: 15px; margin: 0 9px 0 12px; }
.mg { width: 54px; }
.m, .r { height: 26px; padding-left: 4px; font-size: 12.300px; }
.m { width: 94px; }
.rot { width: 64px; padding-left: 9px; }
.r { width: 95px; }
.chk { width: 14px; height: 14px; margin: 0 4.500px 0 6px; }
.rn { width: 53px; }
.crs { width: 16px; height: 16px; margin-right: 2px; }
.epsg { width: 82px; font-size: 12px; }
.log { width: 18px; height: 16px; }

/* drag annotation across the window */
.pointer { position: absolute; inset: 0; width: 1914px; height: 990px; pointer-events: none; }
```
